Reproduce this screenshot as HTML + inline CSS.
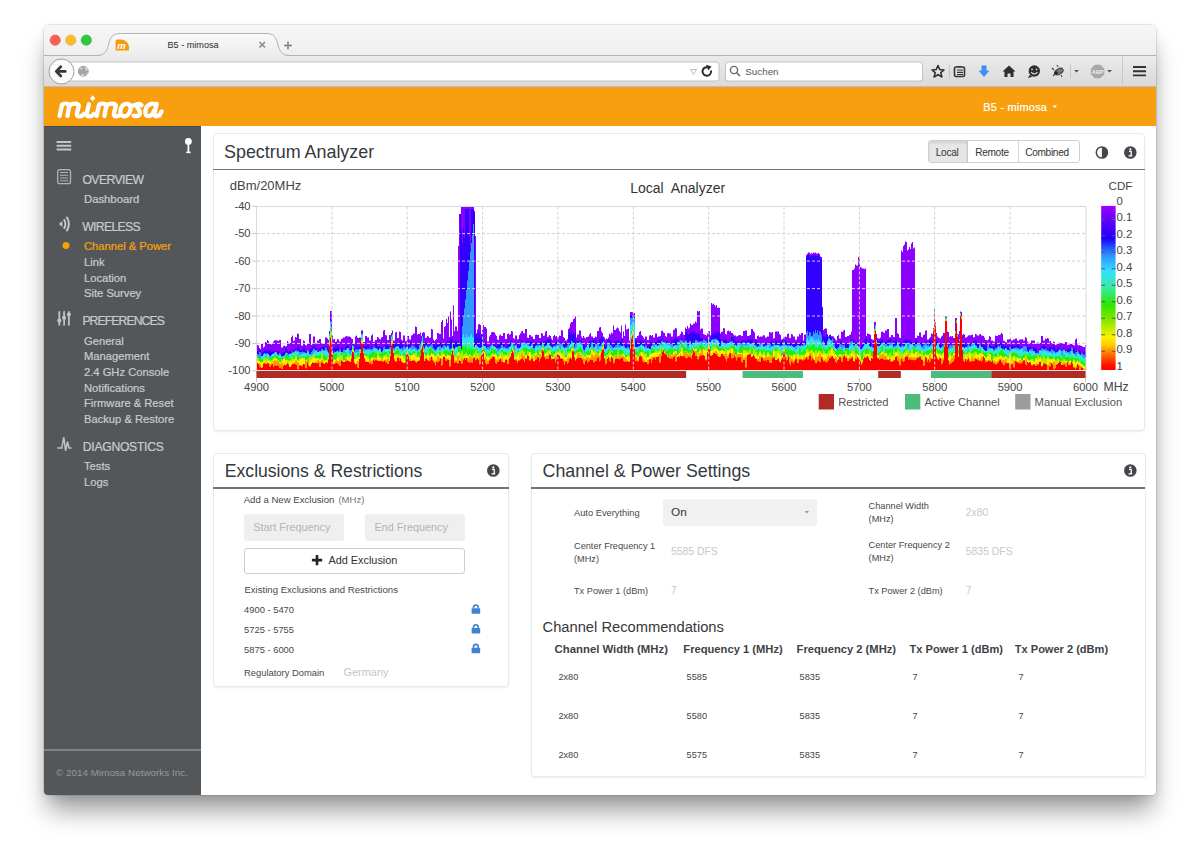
<!DOCTYPE html>
<html><head><meta charset="utf-8"><title>B5 - mimosa</title>
<style>
html,body{margin:0;padding:0;background:#fff;width:1200px;height:858px;overflow:hidden;}
body{position:relative;font-family:"Liberation Sans", sans-serif;}
.t{position:absolute;line-height:1;white-space:pre;}
.sb{-webkit-text-stroke:0.22px currentColor;}
.abs{position:absolute;}
svg{position:absolute;overflow:visible;}
</style></head><body>
<div class="abs" style="left:44px;top:25px;width:1112px;height:770px;border-radius:5px 5px 4px 4px;box-shadow:0 0 0 0.5px rgba(0,0,0,0.17),0 19px 26px -4px rgba(0,0,0,0.40),0 3px 10px rgba(0,0,0,0.08);background:#fff;overflow:hidden;"><div class="abs" style="left:0;top:0;width:1112px;height:30px;background:linear-gradient(#f6f6f6,#efefef);"></div><div class="abs" style="left:0;top:30px;width:1112px;height:1px;background:#bdbdbd;"></div><div class="abs" style="left:0;top:31px;width:1112px;height:31px;background:linear-gradient(#ebebeb,#d9d9d9);"></div><div class="abs" style="left:0;top:61px;width:1112px;height:1px;background:#b4b4b4;"></div></div><svg style="left:0;top:0" width="1200" height="100" viewBox="0 0 1200 100">
<defs><linearGradient id="tabg" x1="0" y1="0" x2="0" y2="1"><stop offset="0" stop-color="#fafafa"/><stop offset="1" stop-color="#ececec"/></linearGradient></defs>
<path d="M96.5 56 C104.5 56 106.5 52 108.5 45 C110.5 37 112.5 33.5 120.5 33.5 L266 33.5 C274 33.5 276 37 278 45 C280 52 282 56 290 56 Z" fill="url(#tabg)"/>
<path d="M44 55.5 L96.5 55.5 C104.5 55.5 106.5 52 108.5 45 C110.5 37 112.5 33.5 120.5 33.5 L266 33.5 C274 33.5 276 37 278 45 C280 52 282 55.5 290 55.5 L1156 55.5" fill="none" stroke="#b3b3b3" stroke-width="1"/>
<circle cx="55.2" cy="40.2" r="5.1" fill="#fc5f57" stroke="#e0443e" stroke-width="0.6"/>
<circle cx="70.7" cy="40.2" r="5.1" fill="#fdbb2e" stroke="#dea236" stroke-width="0.6"/>
<circle cx="86.3" cy="40.2" r="5.1" fill="#2ac940" stroke="#1aab29" stroke-width="0.6"/>
<g transform="translate(115.6,39.4)"><path d="M0 11.2 V1.5 Q0 0 1.5 0 H5.5 C9.8 0 13.4 3.8 13.4 8.2 V11.2 Z" fill="#f49b12"/><text x="1.6" y="9.6" font-family="Liberation Sans" font-style="italic" font-weight="bold" font-size="9.5" fill="#fff">m</text></g>
<path d="M259.5 42 L265 47.5 M265 42 L259.5 47.5" stroke="#8a8a8a" stroke-width="1.6"/>
<path d="M288 41.5 V49.5 M284 45.5 H292" stroke="#7a7a7a" stroke-width="1.4"/>
<rect x="58" y="62" width="661" height="19" rx="3" fill="#fff" stroke="#c2c2c2" stroke-width="1"/>
<rect x="725.5" y="62" width="197" height="19" rx="3" fill="#fff" stroke="#c2c2c2" stroke-width="1"/>
<circle cx="61.5" cy="71.5" r="12.5" fill="#fbfbfb" stroke="#9f9f9f" stroke-width="1"/>
<path d="M56.8 71.4 H65.3 M60.8 66.8 L56.2 71.4 L60.8 76" fill="none" stroke="#383838" stroke-width="2.7" stroke-linecap="round" stroke-linejoin="round"/>
<circle cx="83.3" cy="71.3" r="5.0" fill="#a6a6a6" stroke="#999" stroke-width="0.8"/>
<path d="M79.5 69.5 Q80.5 67.5 82 67 L81.8 69 Z M84.5 67 Q87 67.5 87.8 69.5 L86.5 71 Z M82 74 Q83.5 73.5 84.5 75.5 Q83 76.2 81.5 75.8 Z M86.8 73 L87.8 72.5 Q87.5 74.5 86 75 Z" fill="#e8e8e8"/>
<path d="M690.5 69.5 L696.5 69.5 L693.5 74.5 Z" fill="none" stroke="#b5b5b5" stroke-width="0.9"/>
<path d="M711 70.5 A4.3 4.3 0 1 1 707.5 67.2" fill="none" stroke="#2a2a2a" stroke-width="2"/>
<path d="M706 64.8 L711.5 66.6 L708.3 70.4 Z" fill="#2a2a2a"/>
<circle cx="734" cy="70" r="3.6" fill="none" stroke="#6a6a6a" stroke-width="1.4"/>
<path d="M736.5 72.5 L740 76" stroke="#6a6a6a" stroke-width="1.6"/>
<path d="M938 65.5 L939.8 69.6 L944 69.9 L940.8 72.6 L941.9 77 L938 74.6 L934.1 77 L935.2 72.6 L932 69.9 L936.2 69.6 Z" fill="none" stroke="#2e2e2e" stroke-width="1.5" stroke-linejoin="round"/>
<path d="M949.5 65 V78" stroke="#c4c4c4" stroke-width="1"/>
<rect x="954.5" y="67" width="10" height="9.5" rx="1.5" fill="none" stroke="#333" stroke-width="1.6"/>
<path d="M957.5 66.5 h4 M957 70 h6 M957 72.3 h6 M957 74.5 h6" stroke="#333" stroke-width="1.2"/>
<path d="M981.5 65.5 H986.5 V70.5 H989.5 L984 77 L978.5 70.5 H981.5 Z" fill="#3b8ef5"/>
<path d="M1009 65.5 L1015.5 71.5 H1013.5 V77 H1010.5 V73.5 H1007.5 V77 H1004.5 V71.5 H1002.5 Z" fill="#2e2e2e"/>
<circle cx="1034.3" cy="71" r="5.7" fill="#2e2e2e"/>
<path d="M1029.5 75 L1028 78.2 L1032.5 76.5 Z" fill="#2e2e2e"/>
<path d="M1031.3 72 C1032.5 74.5 1036 74.5 1037.3 72" fill="none" stroke="#ddd" stroke-width="1.2"/>
<circle cx="1032" cy="69.3" r="0.9" fill="#ddd"/><circle cx="1036.5" cy="69.3" r="0.9" fill="#ddd"/>
<g fill="none" stroke="#444" stroke-width="1.1"><ellipse cx="1059" cy="71.5" rx="4.5" ry="2.6" transform="rotate(-30 1059 71.5)" fill="#777"/><path d="M1054 70 l-2 -2 M1055 74 l-2 2 M1061 75 l1 2 M1058 67 l-1 -2"/></g>
<circle cx="1056" cy="73" r="1.8" fill="#222"/>
<path d="M1070.5 65 V78" stroke="#c4c4c4" stroke-width="1"/>
<path d="M1074 70 H1079 L1076.5 72.5 Z" fill="#555"/>
<path d="M1094.8 64.8 H1100.4 L1104.3 68.7 V74.3 L1100.4 78.2 H1094.8 L1090.9 74.3 V68.7 Z" fill="#a8a8a8"/>
<text x="1097.6" y="73.6" font-size="5.6" font-weight="bold" text-anchor="middle" fill="#eee" font-family="Liberation Sans">ABP</text>
<path d="M1107 70 H1112 L1109.5 72.5 Z" fill="#555"/>
<path d="M1122.5 57 V85" stroke="#c8c8c8" stroke-width="1"/>
<path d="M1133 67 H1146 M1133 71.2 H1146 M1133 75.4 H1146" stroke="#333" stroke-width="1.9"/>
</svg>
<div class="t " style="left:167.50px;top:40.60px;font-size:9.1px;color:#2b2b2b;">B5 - mimosa</div>
<div class="t " style="left:745.30px;top:66.90px;font-size:9.8px;color:#555;">Suchen</div>
<div class="abs" style="left:44px;top:87px;width:1112px;height:39px;background:#f89f10;"></div><div class="abs" style="left:44px;top:86px;width:1112px;height:1px;background:#b9bcc0;"></div><svg style="left:0;top:0" width="1200" height="130"><g fill="none" stroke="#fff" stroke-width="4.3" stroke-linecap="round" stroke-linejoin="round">
<path d="M59.6 116 L61.9 105.2 Q62.6 103.6 64.8 103.6 Q69.9 103.4 69.1 106.8 L67.4 116"/>
<path d="M68.9 107.2 Q70.6 103.6 74.2 103.6 Q79.4 103.4 78.6 106.8 L76.9 113.4 Q76.4 116.6 79.6 116.4 Q82.4 116.1 84.2 113.8"/>
<path d="M88.9 104.2 L86.7 113.6 Q86.3 116.6 89.4 116.4 Q92.2 116.1 94 113.8"/>
<path d="M96.6 116 L98.9 105.2 Q99.6 103.6 101.8 103.6 Q106.9 103.4 106.1 106.8 L104.4 116"/>
<path d="M105.9 107.2 Q107.6 103.6 111.2 103.6 Q116.4 103.4 115.6 106.8 L113.9 113.4 Q113.4 116.6 116.6 116.4 Q118.6 116.2 120 114.8"/>
<path d="M127.6 103.9 Q122.4 103.2 120.6 109.5 Q119.5 115.8 123.6 116.3 Q128.6 116.8 130.4 110.3 Q131.6 104.6 127.6 103.9 Z"/>
<path d="M130.2 105.6 Q133 106.2 135.8 104.6"/>
<path d="M141.4 105.2 Q139.2 103.2 137.4 104.9 Q136.3 106.6 138.6 109.3 Q140.6 111.8 139.6 114.3 Q138.2 116.9 133.6 115.6"/>
<path d="M155.6 105.4 Q154 103.3 151.2 103.8 Q146.2 105 145.4 110.8 Q145 116.4 148.6 116.2 Q152.2 115.8 154.2 110.4 M156.6 103.8 L154.5 113.4 Q154.1 116.6 157.2 116.2 Q160.2 115.6 161.6 111.4"/>
</g><path d="M90 98.2 L92.9 95.3 L95.4 98.4 L92.5 101.3 Z" fill="#fff"/><circle cx="161.3" cy="117.3" r="0.7" fill="#fde3b8"/></svg>
<div class="t " style="left:983.30px;top:101.67px;font-size:10.9px;color:#fff;letter-spacing:0.25px;-webkit-text-stroke:0.2px #fff;">B5 - mimosa</div>
<svg style="left:1052px;top:105px" width="6" height="4"><path d="M0.5 0.5 H5 L2.75 3 Z" fill="#fff"/></svg><div class="abs" style="left:44px;top:126px;width:156.5px;height:669px;background:#54575a;border-bottom-left-radius:4px;"></div><div class="abs" style="left:44px;top:126px;width:156.5px;height:1px;background:#3f4a55;"></div><div class="abs" style="left:44px;top:749.3px;width:156.5px;height:2px;background:#7f8285;"></div><svg style="left:0;top:0" width="1200" height="858">
<path d="M56.6 142.1 H71.2 M56.6 145.8 H71.2 M56.6 149.5 H71.2" stroke="#c3c5c7" stroke-width="2.0"/>
<circle cx="188.4" cy="141.5" r="3.4" fill="#fff"/><path d="M188.4 143 V152" stroke="#fff" stroke-width="1.7"/><path d="M186.2 152.4 H190.6" stroke="#fff" stroke-width="1.5"/>
<rect x="57.7" y="169.7" width="12.8" height="14" rx="2" fill="none" stroke="#b0b2b4" stroke-width="1.3"/>
<path d="M60 172.5 H68 M60 175.3 H68 M60 178 H68 M60 180.8 H68" stroke="#b0b2b4" stroke-width="1"/>
<path d="M58.8 224 L62.4 221 V227 Z" fill="#c4c6c8"/>
<path d="M63.9 219.2 Q67 224 63.9 228.8 M66.6 216.8 Q71.2 224 66.6 231.2" fill="none" stroke="#c4c6c8" stroke-width="2"/>
<circle cx="66" cy="245.6" r="3.5" fill="#f7a00d"/>
<path d="M59.3 311.2 V325.5 M64.1 311.2 V325.5 M68.9 311.2 V325.5" stroke="#c0c2c4" stroke-width="1.8"/>
<circle cx="59.3" cy="320.6" r="2.1" fill="#c0c2c4"/><circle cx="64.1" cy="317.8" r="2.1" fill="#c0c2c4"/><circle cx="68.9" cy="314.6" r="2.1" fill="#c0c2c4"/>
<path d="M57.3 448 H61.8 L63.8 437.2 L65.6 450.8 L67.5 441.6 L69 448 H71.5" fill="none" stroke="#c0c2c4" stroke-width="1.5" stroke-linejoin="miter"/>
</svg>
<div class="t sb" style="left:82.40px;top:173.87px;font-size:12.2px;color:#c9cacb;letter-spacing:-0.55px;">OVERVIEW</div>
<div class="t sb" style="left:84.00px;top:194.23px;font-size:11.3px;color:#c9cacb;">Dashboard</div>
<div class="t sb" style="left:82.20px;top:220.97px;font-size:12.2px;color:#c9cacb;letter-spacing:-0.65px;">WIRELESS</div>
<div class="t sb" style="left:84.00px;top:241.42px;font-size:11.2px;color:#f7a00d;">Channel &amp; Power</div>
<div class="t sb" style="left:84.00px;top:257.02px;font-size:11.2px;color:#c9cacb;">Link</div>
<div class="t sb" style="left:84.00px;top:272.72px;font-size:11.2px;color:#c9cacb;">Location</div>
<div class="t sb" style="left:84.00px;top:288.42px;font-size:11.2px;color:#c9cacb;">Site Survey</div>
<div class="t sb" style="left:82.40px;top:315.07px;font-size:12.2px;color:#c9cacb;letter-spacing:-0.9px;">PREFERENCES</div>
<div class="t sb" style="left:84.00px;top:335.52px;font-size:11.2px;color:#c9cacb;">General</div>
<div class="t sb" style="left:84.00px;top:351.22px;font-size:11.2px;color:#c9cacb;">Management</div>
<div class="t sb" style="left:84.00px;top:366.92px;font-size:11.2px;color:#c9cacb;">2.4 GHz Console</div>
<div class="t sb" style="left:84.00px;top:382.62px;font-size:11.2px;color:#c9cacb;">Notifications</div>
<div class="t sb" style="left:84.00px;top:398.32px;font-size:11.2px;color:#c9cacb;">Firmware &amp; Reset</div>
<div class="t sb" style="left:84.00px;top:414.02px;font-size:11.2px;color:#c9cacb;">Backup &amp; Restore</div>
<div class="t sb" style="left:82.80px;top:440.97px;font-size:12.2px;color:#c9cacb;letter-spacing:-0.3px;">DIAGNOSTICS</div>
<div class="t sb" style="left:84.00px;top:461.12px;font-size:11.2px;color:#c9cacb;">Tests</div>
<div class="t sb" style="left:84.00px;top:476.72px;font-size:11.2px;color:#c9cacb;">Logs</div>
<div class="t " style="left:56.00px;top:768.42px;font-size:9.9px;color:#96999c;">© 2014 Mimosa Networks Inc.</div>
<div class="abs" style="left:212.5px;top:133px;width:932.0px;height:297.5px;border:1px solid #e9e9e9;border-radius:4px;box-shadow:0 1px 2px rgba(0,0,0,0.07);box-sizing:border-box;background:#fff;"></div><div class="abs" style="left:212.5px;top:452.5px;width:296.0px;height:234.0px;border:1px solid #e9e9e9;border-radius:4px;box-shadow:0 1px 2px rgba(0,0,0,0.07);box-sizing:border-box;background:#fff;"></div><div class="abs" style="left:531px;top:452.5px;width:614.5px;height:324.0px;border:1px solid #e9e9e9;border-radius:4px;box-shadow:0 1px 2px rgba(0,0,0,0.07);box-sizing:border-box;background:#fff;"></div><div class="abs" style="left:212.5px;top:168.8px;width:932px;height:1.3px;background:#727578;"></div><div class="abs" style="left:212.5px;top:487.4px;width:296px;height:1.3px;background:#727578;"></div><div class="abs" style="left:531px;top:487.4px;width:614px;height:1.3px;background:#727578;"></div><div class="t " style="left:224.00px;top:143.85px;font-size:17.9px;color:#33383d;">Spectrum Analyzer</div>
<div class="t " style="left:224.80px;top:462.80px;font-size:17.6px;color:#33383d;">Exclusions &amp; Restrictions</div>
<div class="t " style="left:542.60px;top:462.63px;font-size:17.8px;color:#33383d;">Channel &amp; Power Settings</div>
<div class="abs" style="left:928px;top:140px;width:151.5px;height:22.8px;border:1px solid #cfcfcf;border-radius:3px;box-sizing:border-box;background:#fff;overflow:hidden;"><div class="abs" style="left:0;top:0;width:38px;height:21px;background:#e6e6e6;box-shadow:inset 0 2px 3px rgba(0,0,0,0.10);border-right:1px solid #c8c8c8;"></div><div class="abs" style="left:88.5px;top:0;width:1px;height:21px;background:#d6d6d6;"></div></div><div class="t " style="left:935.80px;top:147.85px;font-size:10.1px;color:#333;letter-spacing:-0.3px;">Local</div>
<div class="t " style="left:975.20px;top:147.85px;font-size:10.1px;color:#333;letter-spacing:-0.3px;">Remote</div>
<div class="t " style="left:1025.20px;top:147.85px;font-size:10.1px;color:#333;letter-spacing:-0.3px;">Combined</div>
<svg style="left:0;top:0" width="1200" height="858">
<circle cx="1101.9" cy="152.5" r="5.6" fill="none" stroke="#43474b" stroke-width="1.5"/><path d="M1101.9 146.9 A5.6 5.6 0 0 1 1101.9 158.1 Z" fill="#43474b"/>
<circle cx="1130.3" cy="152.5" r="6.3" fill="#43474b"/><circle cx="1130.3" cy="149.3" r="1.1" fill="#fff"/><path d="M1129 151.3 H1131.2 V155.5 H1132 M1128.5 155.8 H1132.2" stroke="#fff" stroke-width="1.3" fill="none"/>
<circle cx="493.3" cy="470.5" r="6.3" fill="#43474b"/><circle cx="493.3" cy="467.3" r="1.1" fill="#fff"/><path d="M1 0" /><path d="M492 469.3 H494.2 V473.5 H495 M491.5 473.8 H495.2" stroke="#fff" stroke-width="1.3" fill="none"/>
<circle cx="1130.3" cy="470.5" r="6.3" fill="#43474b"/><circle cx="1130.3" cy="467.3" r="1.1" fill="#fff"/><path d="M1129 469.3 H1131.2 V473.5 H1132 M1128.5 473.8 H1132.2" stroke="#fff" stroke-width="1.3" fill="none"/>
</svg>
<svg style="left:0;top:0" width="1200" height="858">
<defs><linearGradient id="cbar" x1="0" y1="0" x2="0" y2="1">
<stop offset="0" stop-color="#a000ff"/><stop offset="0.1" stop-color="#5a00ff"/><stop offset="0.2" stop-color="#1e00ff"/><stop offset="0.25" stop-color="#2050ff"/><stop offset="0.3" stop-color="#3090ff"/><stop offset="0.4" stop-color="#33e0ff"/><stop offset="0.5" stop-color="#36eaa0"/><stop offset="0.6" stop-color="#2ee600"/><stop offset="0.7" stop-color="#88e800"/><stop offset="0.8" stop-color="#fff000"/><stop offset="0.85" stop-color="#ffc800"/><stop offset="0.9" stop-color="#ff7800"/><stop offset="0.97" stop-color="#ff1000"/><stop offset="1" stop-color="#ff0000"/>
</linearGradient><filter id="blr" x="-2%" y="-2%" width="104%" height="104%"><feGaussianBlur stdDeviation="0.45"/></filter></defs>
<g filter="url(#blr)"><path fill="#8c00ff" d="M257 370V345H258V345.5H259V348H260V349H261V344H262V343.5H263V347.5H264V346.5H265V342H266V342.5H267V340H268V341H269V343.5H270V344H271V344.5H272V343.5H273V341.5H274V340.5H275V340H276V340.5H278V341H279V340H281V347.5H283V346H284V345.5H285V346.5H286V346H287V341H288V342.5H289V343.5H290V343H291V337H292V335.5H293V341H294V340.5H295V337H296V337.5H297V333.5H298V334H299V339H301V345.5H303V340.5H304V341H305V345H306V345.5H307V343.5H309V334H311V345H312V343.5H313V336.5H315V343.5H317V340.5H319V339H321V343.5H323V344H325V337.5H327V338.5H328V340H329V331H330V311H332V335.5H333V339.5H334V339H335V342H336V341.5H337V339H338V339.5H339V341.5H341V339H342V338.5H343V337.5H345V336.5H346V336H347V336.5H350V337H351V338.5H352V339H353V344H355V336.5H356V335.5H357V337.5H358V338H359V337.5H361V330.5H363V342H365V336H367V337.5H369V340.5H371V335.5H372V334.5H373V342H374V341.5H375V340H377V337H378V337.5H379V339H380V339.5H381V337.5H382V337H383V330.5H384V330H385V335H386V335.5H387V340H389V335H391V333H392V330.5H393V340.5H395V332.5H396V332H397V338H399V331.5H400V332H401V339.5H402V340.5H403V335.5H405V341H407V336H409V339.5H411V335.5H412V335H413V333.5H415V326.5H416V327H417V334.5H418V334H420V332.5H421V336H422V333H423V332H424V332.5H425V338H426V337.5H427V336H428V336.5H429V338H430V337.5H431V329H432V329.5H433V339.5H434V341H435V340H436V339H437V333H439V334H441V322H442V320H443V338.5H444V327H445V326H446V319H447V323H448V316H449V337H450V311.5H451V319.5H452V336H453V305.5H454V331H455V326.5H457V331H458V246H459V214H461V206H474V211H475V236H476V333.5H477V329.5H478V324.5H479V324H480V325H481V334H482V330H483V325H484V327H486V328.5H487V341.5H489V336.5H490V335H491V332.5H492V332H494V332.5H495V334.5H496V336H497V339.5H498V340H499V335.5H500V334.5H501V336H503V333H505V339H507V334H508V333.5H509V335H510V334H511V331H512V331.5H513V338H514V339H515V335.5H517V339.5H518V339H519V335H520V333.5H521V331.5H522V331H523V333H524V333.5H525V329H527V337.5H528V338H529V335H531V336.5H533V339H535V335H536V334.5H537V335H539V338H541V333H542V333.5H543V336H544V335.5H545V331.5H546V331H547V337H548V336.5H549V335H550V336H551V338.5H552V340H553V336H554V335H555V336.5H556V336H557V337.5H558V337H559V335.5H560V336H561V330H562V330.5H563V337H564V338H565V340.5H567V339H568V329H569V327.5H570V323.5H571V322H573V319H574V318.5H575V316.5H576V337.5H577V334.5H579V330.5H581V336.5H582V338H583V336H584V337.5H585V338.5H586V337H588V336.5H589V334.5H590V333H591V336.5H593V338H595V336.5H596V337H597V331H599V327.5H600V327H601V331.5H602V333H603V336.5H604V337.5H605V339.5H606V338.5H607V339H608V337.5H609V333.5H610V334.5H611V332.5H612V333.5H613V325.5H614V330H616V328.5H617V327.5H618V328.5H619V331H620V332.5H621V325.5H622V338H623V331.5H624V336H625V324.5H626V329.5H627V329H628V328.5H629V340.5H630V312H633V313H635V338H637V336H638V335.5H639V332H640V331H641V335H642V336H643V337.5H644V339H645V336.5H647V340H649V335.5H650V335H651V336H652V335H653V337.5H655V333.5H657V337H658V336.5H660V336H661V331H662V330.5H663V332.5H664V333H665V336H666V337H667V333.5H668V333H669V333.5H671V336.5H673V330H674V329.5H675V328H676V328.5H677V336.5H678V336H679V335.5H680V334H681V331.5H682V332H683V334.5H684V335H685V327.5H686V329H687V326H688V328.5H689V327.5H690V323.5H691V325H693V323.5H695V321.5H696V322.5H697V311H698V311.5H699V311H700V329.5H701V328.5H703V334H704V334.5H705V335H706V335.5H707V333.5H708V331H710V335.5H711V303H712V304.5H713V303.5H714V305H715V306.5H716V305H717V308H718V307.5H719V308H720V333.5H721V332H722V331.5H723V328H724V328.5H725V334H726V334.5H727V331H728V330.5H729V331.5H730V331H731V333H733V334.5H734V335.5H736V336.5H737V336H738V335.5H739V335H741V336H743V331H745V330.5H747V336H749V335.5H750V335H751V329H753V331H754V332.5H755V339H756V339.5H757V336H758V335.5H759V337H760V336.5H763V335H764V335.5H765V337.5H767V336.5H769V332H770V332.5H772V332H773V338.5H774V338H775V331.5H779V334H780V335H781V339.5H782V339H783V337.5H784V337H785V336.5H786V337H787V334H788V333.5H789V338H791V334H792V334.5H793V336.5H795V340H796V339.5H797V336.5H799V334H800V335H801V333H803V340.5H804V334.5H806V255H807V253.5H808V252.5H810V254H811V253H812V253.5H813V252.5H814V253H815V252.5H816V253.5H818V253H819V254H820V256.5H821V257H822V307H823V330H824V329H825V328.5H827V334.5H828V336.5H829V335H830V334.5H831V336.5H834V338H835V339.5H836V340.5H837V336H838V335H839V338.5H841V331.5H842V332H843V330.5H844V330H845V337H847V336H849V335H850V334.5H851V331.5H852V270H854V268.5H855V264.5H856V265.5H858V257H859V256.5H860V267H861V267.5H862V268.5H864V269H865V268.5H866V336H867V333.5H868V334H870V335H871V339H872V339.5H873V340H874V322H876V334H877V338H878V338.5H880V337.5H881V332H882V331.5H883V332.5H884V333H885V330.5H887V329H889V337.5H890V337H891V335H893V337H895V318H897V333H898V334H899V337.5H900V338H901V250.5H902V252H903V246H904V244.5H905V241.5H906V242H907V250.5H908V249.5H909V247H910V249H911V243.5H912V242H913V248.5H914V247.5H915V338H917V335.5H918V336H919V332.5H921V337H922V337.5H923V335H924V334.5H925V330.5H927V339.5H929V338H930V337H931V333.5H932V334H933V328H934V309H935V322.5H936V333H937V336.5H938V337.5H939V338H940V338.5H941V336.5H942V335.5H943V333H945V316.5H947V331.5H948V332H949V337H950V336H951V336.5H952V336H953V338H955V318H957V334H958V334.5H959V331H960V311.5H961V312H962V335H963V334H964V334.5H965V337.5H967V336.5H968V335.5H969V335H970V335.5H971V335H972V334.5H973V337.5H974V337H975V334H976V334.5H977V335.5H979V334.5H980V334H981V335.5H983V336H984V337.5H985V340H987V340.5H988V339.5H989V336H990V337H991V340.5H993V341.5H995V335.5H996V336H998V335H1000V334.5H1001V333H1002V334H1003V340.5H1004V341H1005V342H1006V342.5H1007V339.5H1009V339H1010V338.5H1011V340.5H1013V339.5H1015V338.5H1017V340.5H1018V341H1019V339.5H1022V339H1023V340.5H1025V337H1026V338H1027V341.5H1028V342.5H1029V343H1031V340.5H1035V344H1036V343.5H1037V342.5H1039V343H1041V336H1043V340.5H1045V338.5H1046V339H1047V338H1048V338.5H1049V341.5H1050V341H1051V343H1052V343.5H1053V341.5H1054V342H1055V345H1056V344.5H1057V344H1058V343H1059V342.5H1060V343H1063V343.5H1065V342H1067V345H1068V344.5H1070V344H1072V344.5H1073V345H1074V345.5H1075V339.5H1076V338.5H1077V344.5H1078V345.5H1079V345H1080V345.5H1081V346H1082V346.5H1083V347H1085V345H1086V370Z"/>
<path fill="#3300ff" d="M257 370V350.5H258V351.5H259V350H260V351H261V353.5H262V353H263V351.5H264V350H265V350.5H267V350H268V350.5H269V350H270V350.5H271V352H272V351H273V352H274V351H275V351.5H276V352.5H277V350.5H278V351H279V352.5H280V353H281V353.5H283V352.5H284V352H285V348.5H286V348H287V350.5H288V351.5H289V351H291V352.5H292V351H293V350.5H294V350H295V349.5H296V350H297V345.5H298V346H299V350.5H302V350H303V347.5H305V351H307V350H308V350.5H309V350H311V348.5H312V347.5H313V346H315V348H317V352H319V348H321V347.5H323V347H325V346.5H327V347H328V349H329V332.5H330V319H331V327.5H332V349H333V348H334V347.5H335V348H336V347.5H337V345H338V346H339V349.5H341V347.5H343V348.5H345V347.5H346V346.5H347V345H349V348.5H350V349H351V346H352V344H353V345H354V348H355V345.5H356V345H357V347H358V347.5H359V346H361V332H363V346.5H365V345.5H366V346H367V344.5H369V347.5H370V348H372V347.5H373V347H374V346.5H375V343.5H377V346.5H378V347H379V346.5H380V347H383V346H384V345.5H385V345H387V346H388V345.5H389V346.5H391V334.5H392V332H393V342.5H395V344H396V343.5H399V341H400V341.5H401V343.5H402V344.5H403V346.5H405V345H407V345.5H408V345H409V343H411V346H412V345.5H413V346.5H415V344H416V344.5H417V344H418V343.5H419V342H420V341H421V339.5H422V334.5H423V344H424V344.5H425V342.5H426V342H427V345.5H428V346H429V345H430V344H431V343H432V344H433V342H434V343.5H435V345.5H436V344.5H437V345H438V344.5H439V342H441V345H442V344H443V344.5H445V344H446V344.5H447V340.5H448V341.5H449V341H450V338.5H451V339.5H452V338.5H453V341H454V342H455V340.5H457V342H458V340H459V343.5H460V214H461V231H462V244H463V228H464V237.5H465V209H469V237H470V249.5H471V209H474V214H475V334.5H476V333.5H477V338H478V332.5H479V333H480V337H481V334H482V333H483V344H484V344.5H485V341.5H486V343.5H487V346.5H489V347.5H490V346H491V345.5H492V344.5H493V344H494V344.5H495V345H496V346.5H497V343H498V343.5H499V344H500V342.5H501V342H502V342.5H503V343.5H505V347H507V341.5H509V343.5H510V342.5H511V340H512V340.5H513V344.5H514V345.5H517V342.5H518V342H519V345.5H520V344.5H521V340.5H523V342.5H524V343H525V341.5H527V340.5H528V341H529V341.5H533V343.5H535V342.5H536V342H537V345H539V341.5H540V342H541V341.5H542V341H543V341.5H544V341H545V340.5H546V340H547V339H550V340H551V344H552V345H553V343.5H554V343H555V342H556V341H557V341.5H559V342H560V342.5H562V343H564V344H565V343H567V342.5H568V334.5H569V331.5H570V334H571V332.5H572V334.5H573V332.5H574V335H575V332.5H576V341H577V340.5H579V341.5H581V340.5H582V342H583V344H584V345H585V346.5H586V345.5H587V343H588V342.5H589V341H590V340H591V341H593V340H595V339.5H596V340H597V342.5H599V338.5H600V338H601V336.5H602V338H603V340H604V345H605V346.5H606V345.5H607V340H608V339H609V340H610V340.5H611V344H612V345H613V341.5H614V340.5H615V341.5H616V340.5H619V342H621V339H623V343.5H624V344.5H625V344H626V344.5H627V345H630V315.5H631V316H632V315H633V314.5H634V315H635V340.5H636V340H637V342.5H639V340.5H640V339.5H641V340H642V341H643V342H644V343.5H645V345H647V344.5H649V342H651V342.5H652V342H653V343.5H655V342H657V340H658V339.5H659V340H660V339.5H661V338.5H663V340.5H664V341H665V340.5H666V341H667V341.5H668V341H669V343.5H670V344H671V339.5H674V339H675V338.5H677V339H678V338.5H679V341H680V339.5H681V338H682V339H683V342H684V342.5H685V332H687V333.5H688V334.5H689V334H690V331.5H691V333H692V331H693V331.5H695V334H697V333.5H699V334H700V338H703V339.5H704V340H705V339H706V339.5H707V340.5H708V336H709V340H710V341H711V335H712V334H713V332.5H714V334H715V331H716V334.5H717V331.5H718V332H719V333H720V339H721V341.5H723V339.5H724V340H725V339H727V342H728V341.5H729V342.5H730V342H731V337H733V337.5H734V338.5H735V341H736V342H737V340.5H738V340H739V343.5H740V343H741V341H743V340H745V341.5H746V341H747V339.5H748V339H749V339.5H750V339H751V340H752V339.5H753V343.5H754V344.5H755V339H756V339.5H757V343H758V342.5H759V344H760V343.5H761V342.5H762V343H763V344.5H764V345H765V343H767V342H770V342.5H771V341.5H773V344.5H774V344H775V340H777V341.5H779V340.5H780V341.5H781V342H782V341.5H783V338H784V337.5H785V341H786V342H787V342.5H790V343H791V344H792V345H793V344H795V343H796V342.5H797V343.5H801V341.5H802V342H804V341.5H805V342H806V257.5H807V256H808V255H810V256.5H811V255.5H812V256H813V255H814V255.5H815V255H816V256H818V255.5H819V256.5H820V259H821V259.5H822V309H823V336H825V337H826V334.5H828V337H829V335H830V335.5H831V336.5H833V341H834V342H835V343.5H836V344.5H837V343.5H838V342.5H839V342H840V341.5H841V343.5H843V345.5H844V345H845V343.5H846V343H847V342.5H849V342H850V341.5H851V340H852V339.5H853V340.5H854V341H855V343H856V343.5H858V345H859V347.5H860V348H861V346H862V345H863V343H864V341H865V338.5H866V338H867V341.5H868V342H869V338.5H870V339.5H871V345.5H872V346H873V342.5H874V328H875V324H876V339.5H877V340.5H878V341H879V342H880V341H881V339.5H882V339H883V342.5H884V343H885V341.5H886V342H887V340H889V339H891V341.5H893V341H895V339.5H896V339H897V341.5H898V342.5H900V343H902V342.5H903V341.5H904V340.5H905V339.5H907V340H908V341.5H909V340H910V339.5H911V342H913V343H915V339.5H916V339H917V342H918V342.5H919V343.5H921V342.5H922V343H923V345H924V344.5H925V342H927V343H929V340H930V339H931V339.5H932V340.5H933V328.5H934V309.5H935V323H936V340H937V342H938V343H939V344H940V344.5H941V345.5H942V344.5H943V341.5H945V317H947V345H948V345.5H949V344.5H950V343.5H951V345.5H952V345H955V331H956V319H957V334H958V340H959V339.5H960V312H961V315.5H962V343H963V342H964V342.5H965V345H967V344.5H968V343.5H969V343H970V343.5H971V344H972V343.5H973V341H974V340.5H976V341H977V342.5H979V344.5H983V344H984V345.5H987V345H988V344H989V344.5H990V345.5H991V346.5H992V347H993V346.5H995V343H997V346.5H998V345.5H999V343.5H1000V343H1001V342.5H1002V343.5H1003V345H1004V346H1005V345.5H1006V346.5H1007V346H1008V346.5H1009V343.5H1010V343H1011V345.5H1013V346H1015V345.5H1017V343.5H1018V344H1019V347H1022V346.5H1023V345.5H1025V346H1026V346.5H1028V347.5H1029V347H1031V349H1032V348.5H1033V347.5H1035V348.5H1036V348H1037V352H1039V349H1040V348.5H1041V347H1042V346.5H1043V344.5H1044V345H1045V347H1046V347.5H1047V349H1048V349.5H1049V347H1050V346.5H1051V347.5H1052V348H1053V345.5H1054V346H1055V350.5H1056V350H1057V347.5H1058V346.5H1059V348.5H1060V349.5H1061V351H1063V348H1065V350.5H1067V349.5H1068V349H1069V348.5H1071V347.5H1072V348H1073V348.5H1074V349H1075V351.5H1076V351H1077V350H1078V351.5H1079V350H1080V351H1081V353H1082V353.5H1083V352.5H1085V351H1086V370Z"/>
<path fill="#3399ff" d="M257 370V354H258V354.5H259V352H260V352.5H261V356.5H262V356H263V354H264V353H265V353.5H268V354.5H269V355.5H270V356H271V355H272V354H273V353.5H274V352.5H275V352H276V352.5H277V354.5H278V355.5H279V353H280V353.5H281V356H283V356.5H284V355.5H285V353H286V352.5H287V353H288V354H290V353.5H291V353H292V351.5H293V352H294V351.5H295V350.5H298V351H299V352H302V351.5H303V352H305V353H307V350H308V350.5H309V354.5H311V352H312V350.5H313V348.5H314V349H315V350.5H317V352H319V351.5H321V349H323V350.5H325V347.5H327V350.5H328V352.5H329V334H330V321H331V329.5H332V350H333V352.5H334V351.5H335V352H336V351.5H337V351H338V351.5H339V349.5H341V352.5H342V352H343V349.5H345V350H346V349.5H347V348H349V350H350V350.5H351V350H352V345H353V346H354V351H355V349.5H356V348.5H357V349.5H359V349H361V333.5H363V348H365V349H366V349.5H367V348.5H370V349H372V348.5H373V347H374V346.5H375V348H376V348.5H377V349.5H378V350H379V348.5H381V352H382V351.5H383V347H384V346.5H385V349H389V347.5H390V347H391V335.5H392V333.5H393V348H394V348.5H395V347H396V346.5H399V348.5H400V349H401V347.5H402V348.5H403V346.5H405V347.5H406V347H407V346.5H408V349H409V347.5H411V346H412V345.5H413V346.5H415V347.5H416V348H417V350.5H418V349.5H419V345H420V343.5H421V340.5H422V336H423V346.5H424V348H425V346H426V345.5H427V346.5H430V345.5H431V344H432V344.5H433V348H434V349.5H435V350H436V349H437V347.5H438V347H439V346H441V348H442V347.5H443V345.5H444V345H445V346.5H446V347H447V345H448V345.5H449V348.5H452V342.5H453V348.5H454V349H455V347.5H456V347H458V346.5H459V346H460V346.5H461V349H462V326H463V316.5H464V308.5H465V299.5H466V290H467V280.5H468V271H469V262H470V251.5H471V243H472V235H473V224H474V347H475V345H476V344.5H477V346.5H478V347.5H479V348H481V347H482V342H483V345.5H484V346H485V346.5H486V348.5H487V347H489V347.5H490V346H491V345.5H492V344.5H493V346H494V346.5H495V347H496V348.5H497V348H498V348.5H500V347.5H501V345H503V347H504V346.5H505V348H506V348.5H507V347.5H509V347H510V346H511V342H512V342.5H513V344.5H514V345.5H517V348H518V347.5H519V348H520V347H521V342.5H524V343H525V342.5H526V343H528V343.5H529V346H531V344.5H533V348H535V346H536V345.5H537V345H540V345.5H541V345H542V342H543V343.5H544V346.5H545V346H546V345.5H547V344H548V343.5H549V344.5H550V345.5H551V346.5H552V347.5H553V346.5H554V346H555V345.5H556V344.5H557V345H559V343H560V343.5H562V344H563V347H564V347.5H565V347H567V345H568V344H569V345H570V344H571V340.5H572V341.5H573V343H574V346.5H575V344H576V342.5H577V343H579V342H581V343H582V344.5H583V349H584V350H585V347.5H586V346.5H587V344.5H588V344H589V348H590V347H591V342.5H593V346.5H594V347H595V343.5H596V344H597V343.5H598V343H599V346.5H600V346H601V343.5H602V342.5H603V341H604V348.5H605V349.5H606V348.5H607V343.5H608V342.5H609V344H610V345H611V345.5H612V346.5H613V348H614V347H615V345.5H616V345H617V343.5H619V345.5H620V345H621V346H623V344.5H624V346H625V348H626V348.5H627V346.5H628V347H629V348.5H630V318H635V347H638V346.5H639V346H640V345H641V344.5H642V345.5H644V347H645V345.5H647V348H649V349H651V346H652V345H653V344H655V344.5H657V346H658V345.5H659V343.5H660V343H661V341H662V340.5H663V342H664V342.5H665V342H666V343H667V343.5H670V344H671V343.5H673V346H674V345.5H675V345H676V345.5H677V342H678V341.5H680V340H682V340.5H683V342H684V342.5H685V340.5H687V344.5H688V345H689V341H691V344.5H693V342.5H694V343H695V340H697V341H698V341.5H699V342H700V341H702V341.5H703V339.5H704V340H705V340.5H706V341H707V343.5H708V337.5H709V341.5H710V342H711V340.5H712V339.5H714V339H715V338.5H716V339H717V340H718V341H719V346.5H720V346H721V341.5H723V344H724V344.5H725V343H726V343.5H728V343H729V342.5H730V342H731V341H733V344H734V345H735V344.5H736V345.5H737V344.5H738V343.5H740V343H741V343.5H743V342H745V343H747V342.5H749V344H751V343.5H754V344.5H755V345H756V345.5H757V347H758V346.5H759V344H760V343.5H761V343H763V346.5H765V345.5H766V345H767V344.5H769V343.5H770V344H771V346H772V345.5H773V344.5H774V344H775V345H779V345.5H780V346.5H781V345.5H782V345H783V343.5H784V343H785V345H786V345.5H787V345H789V345.5H790V346H791V345H792V346H793V347H795V346H796V345.5H798V345H799V346H801V345H802V345.5H803V344H804V343.5H805V344.5H806V332.5H807V331H808V335.5H809V332H810V332.5H811V336H812V335.5H813V331.5H814V333.5H815V330H816V333H817V330.5H818V335H819V331H820V332H821V334.5H822V342H823V340.5H824V342.5H825V345H827V341H828V338H829V338.5H830V340H832V338.5H833V343H834V344.5H835V348H836V349H837V348H838V347H839V344.5H840V344H841V344.5H842V345H843V345.5H844V345H845V348.5H847V348H849V342H850V341.5H852V341H853V345H855V344H856V344.5H858V346H859V348.5H860V349H862V347.5H863V346.5H864V344.5H865V344H867V342.5H868V343H869V346H870V347H871V346H872V346.5H873V348H874V328.5H875V324.5H876V340H877V345.5H878V346H880V345H881V343.5H882V343H883V342.5H884V343H885V344H887V345.5H889V342.5H893V346.5H894V346H895V345.5H896V345H897V341.5H898V342.5H899V346.5H900V347H901V345.5H902V345H903V346.5H904V346H905V343H907V343.5H908V344.5H910V344H911V344.5H913V345H914V345.5H915V344H917V344.5H919V344H921V346H922V346.5H923V345H924V344.5H925V343H927V345H928V344.5H929V346.5H930V345.5H931V343.5H932V344H933V328.5H934V310H935V323.5H936V345.5H937V344H938V344.5H939V347H940V348H941V347.5H942V346.5H943V344.5H944V344H945V317.5H947V345H948V347.5H949V345.5H950V345H951V345.5H952V345H955V331H956V319.5H957V334.5H958V345.5H959V339.5H960V312.5H961V316H962V347H963V347.5H964V348H965V347H967V345.5H968V344H969V345.5H970V346H971V344H972V343.5H973V344.5H974V343.5H975V345.5H976V346H977V348.5H979V344.5H981V347.5H983V349H984V350.5H985V351H987V345H988V344H989V348H990V348.5H991V348H992V348.5H993V349.5H995V348H997V347.5H998V346.5H999V346H1000V345H1001V348H1002V349H1003V348.5H1004V349.5H1005V348H1006V348.5H1007V350H1009V350.5H1010V349.5H1011V349H1013V348.5H1015V347.5H1017V348H1019V349H1020V348.5H1021V348H1022V347.5H1023V346H1026V347H1027V351H1028V352H1029V349.5H1031V349H1033V351H1035V353H1037V352.5H1039V350H1041V348.5H1042V348H1043V349H1044V349.5H1045V348.5H1046V349H1047V350.5H1049V351.5H1050V351H1051V349H1052V349.5H1053V350.5H1054V351H1055V352.5H1056V352H1057V351.5H1058V350.5H1059V349.5H1060V350H1061V351H1063V349.5H1065V351H1067V352.5H1069V351.5H1070V351H1071V347.5H1072V348H1073V353.5H1074V354H1075V352.5H1076V352H1077V350.5H1078V352H1079V354H1080V355H1081V353H1082V353.5H1083V354.5H1085V357.5H1086V370Z"/>
<path fill="#33ddff" d="M257 370V356.5H258V357H259V358H260V358.5H261V356.5H262V356H263V354.5H264V353.5H265V354.5H267V353.5H268V354.5H269V357.5H271V355H272V354H274V353H275V352H276V352.5H277V354.5H278V355.5H279V354.5H280V355H281V357H283V356.5H284V355.5H285V354H286V353.5H287V356H288V357H289V354H291V354.5H292V353H294V352.5H295V351H296V351.5H297V352H298V352.5H299V355H301V354H303V353.5H305V353H306V353.5H307V351.5H308V352H309V354.5H311V355.5H312V354.5H313V352.5H315V350.5H317V352H319V351.5H321V351H323V350.5H327V352H328V353.5H329V336H330V323.5H331V331.5H332V350.5H333V354H334V353H335V352H336V351.5H337V351H338V352H341V352.5H342V352H343V353H345V350H346V349.5H347V348H349V354.5H351V352H352V346H353V347H354V352H355V352.5H356V352H358V352.5H359V349H361V335H363V350H364V351.5H365V350H366V350.5H367V350H371V351.5H372V351H373V349H374V348.5H375V348H376V348.5H377V349.5H378V350H379V348.5H380V349H381V352H382V351.5H383V350H384V349.5H385V349H389V349.5H391V337H392V335H393V349H394V350H395V347H396V346.5H399V348.5H400V349H401V350.5H402V351.5H403V349.5H405V349H407V347.5H408V349H409V348H411V350H412V349.5H413V349H415V349.5H416V350.5H418V349.5H419V349H420V347.5H421V342H422V337.5H423V347.5H424V349.5H425V346H426V345.5H427V347.5H428V348H429V346.5H430V346H431V348H432V349H433V348.5H434V350H435V351.5H436V350.5H437V347.5H438V347H439V350.5H441V348H442V347.5H443V349H445V346.5H446V347H447V346H448V346.5H449V349.5H450V350H451V348.5H452V344H453V348.5H454V349H455V347.5H456V347H458V346.5H459V346H460V346.5H461V349H462V337H463V334H464V337.5H465V338H466V334H467V337H468V336.5H469V337.5H470V335.5H471V334.5H472V337.5H473V336.5H474V347H475V345H476V345.5H477V346.5H478V347.5H479V348H482V343.5H483V345.5H484V346H485V346.5H486V348.5H487V350H490V348.5H491V345.5H492V344.5H493V346H494V346.5H495V347H496V348.5H497V351.5H499V350H500V349H501V348H502V348.5H505V348H506V348.5H507V349.5H509V347H510V346H511V344.5H512V344H513V347H514V350.5H515V345.5H517V349.5H518V349H519V348H520V347H521V343.5H522V343H523V345H524V345.5H525V344H527V345.5H528V346H531V344.5H533V350H534V350.5H535V346H536V345.5H537V347H539V345.5H540V346H541V347H542V343.5H543V345H544V346.5H545V346H546V345.5H547V344H548V343.5H549V346H550V346.5H551V347H552V348.5H553V346.5H554V346H555V347.5H556V346.5H557V346H558V345.5H559V348.5H560V349H561V345.5H562V346.5H563V347.5H564V348.5H567V348H568V347H569V345.5H570V344H571V343H572V344H574V348.5H576V347.5H577V343H579V344H581V345H582V346.5H583V351H584V352.5H585V348.5H586V347H587V345H588V344.5H589V348H590V347H591V345.5H593V348.5H595V345.5H596V346H597V349.5H598V349H599V346.5H600V346H601V346.5H602V343.5H603V342.5H604V349H605V349.5H606V348.5H607V346H608V345H609V347H610V348H611V348.5H612V350H613V348H614V347H615V348H616V347.5H621V346.5H624V347.5H625V348H626V348.5H629V349.5H630V325H631V324.5H632V323H633V325H634V324H635V347H638V346.5H639V347H640V346.5H641V344.5H642V345.5H643V346H644V347H645V348.5H647V348H649V349H651V346H652V345H653V347H655V345H657V346H658V345.5H660V344.5H661V345.5H663V342H664V342.5H665V344H666V344.5H667V345H668V344.5H669V346H671V347.5H672V348H673V346H674V345.5H675V345H676V345.5H677V346.5H678V345.5H679V345H680V344H681V342.5H682V343H683V343.5H684V344H685V342H686V342.5H687V348H688V348.5H689V342.5H691V344.5H693V343.5H694V344.5H695V342H697V344H698V344.5H699V343.5H700V342.5H701V344.5H704V345H705V342.5H706V343H707V345.5H708V339H709V342.5H710V342H711V340.5H712V339.5H713V343.5H714V343H715V340H718V341H719V346.5H720V346H721V341.5H723V344H724V344.5H725V343.5H726V344H727V343.5H728V343H729V342.5H730V342H731V343.5H733V344H734V345H736V346H737V344.5H738V343.5H739V345H740V344.5H741V347H743V345H744V345.5H745V346H747V345H749V344H751V343.5H753V344H754V345.5H755V347H756V347.5H757V347H758V346.5H759V347H760V346.5H761V344.5H763V346.5H767V344.5H769V348H770V348.5H771V347H772V346.5H774V346H775V345.5H777V345H779V345.5H780V346.5H781V346H782V345.5H783V346H785V345H786V345.5H787V347.5H788V347H789V345.5H790V346H791V345.5H792V346.5H793V347.5H795V349.5H796V348.5H797V345.5H798V345H799V346.5H801V345.5H802V346H803V346.5H804V346H805V345H806V340H807V338H808V340.5H809V340H810V337H811V338H812V337.5H813V339H814V340.5H816V339.5H817V340.5H818V338.5H819V341.5H821V344H822V346.5H823V343.5H824V345H827V343H828V340H829V339H830V340.5H831V343.5H832V342.5H833V346H834V347H835V348H836V349H837V351H838V350H839V347.5H840V347H841V349H842V349.5H843V347.5H844V347H845V348.5H847V348H849V346H850V345.5H851V344.5H853V347H854V347.5H855V344H856V344.5H857V346H858V347.5H859V348.5H860V349.5H862V348.5H863V346.5H864V344.5H865V344H867V342.5H868V343H869V346H870V347H872V347.5H873V348H874V329.5H875V325.5H876V340.5H877V346.5H878V347H879V346H880V345H881V343.5H882V343H883V345H884V346H885V346.5H889V346H890V345.5H891V345H893V348H894V347.5H895V347H896V346.5H897V344H898V344.5H899V346.5H900V347H903V346.5H904V346H905V343H907V348H908V349.5H909V344.5H910V344H911V344.5H913V346.5H914V347H915V347.5H916V347H917V344.5H919V345.5H921V348H922V349H925V346H927V347.5H928V347H929V346.5H930V345.5H932V346.5H933V329H934V310.5H935V324H936V345.5H937V344H938V344.5H939V347H940V348H941V347.5H942V346.5H943V347H944V346H945V318H947V345.5H948V350H949V349.5H950V348.5H952V348H953V346.5H955V331.5H956V320H957V335H958V346.5H959V339.5H960V313H961V316.5H962V347H963V347.5H964V348H965V347H967V348.5H968V347.5H969V346.5H970V347H971V346.5H972V346H973V344.5H974V344H975V345.5H976V346H977V348.5H979V346.5H980V346H981V347.5H983V349H984V350.5H985V351H987V350.5H988V349.5H989V348H990V348.5H993V351.5H995V350H996V350.5H997V347.5H998V346.5H999V348.5H1000V348H1002V349H1003V349.5H1004V350H1005V348H1006V348.5H1007V350H1009V351.5H1010V351H1011V349H1013V348.5H1015V349.5H1017V350H1018V350.5H1019V350H1020V349.5H1021V349H1022V348.5H1023V352H1024V351.5H1026V352H1027V351.5H1028V352.5H1029V350.5H1031V351.5H1032V351H1033V351.5H1035V353H1037V354H1039V351H1040V350.5H1041V351H1042V350.5H1045V351H1046V351.5H1047V351H1048V351.5H1049V352.5H1050V352H1051V353.5H1052V354H1053V352H1054V352.5H1055V353.5H1056V353H1057V352.5H1058V351.5H1059V349.5H1060V350.5H1061V355.5H1063V350.5H1065V352.5H1066V353H1067V352.5H1069V355H1070V354.5H1071V351H1072V351.5H1073V353.5H1074V354H1075V356.5H1076V356H1077V353H1078V354H1079V354.5H1080V355H1081V355.5H1082V356.5H1083V358H1085V357.5H1086V370Z"/>
<path fill="#33eebb" d="M257 370V356.5H258V357H259V358H260V358.5H262V358H263V357.5H264V356.5H265V356H267V355H268V356H269V357.5H270V358H271V356.5H272V356H273V357H274V356H275V354.5H276V355.5H277V355H278V355.5H279V358H280V358.5H281V357H283V356.5H284V355.5H285V354.5H286V353.5H287V356H288V357H289V355H291V354.5H292V353H294V352.5H295V353.5H296V354H297V353H298V353.5H299V358H301V355.5H303V353.5H305V356.5H306V357H307V355H308V355.5H309V357H311V355.5H312V354.5H315V355.5H317V352H319V351.5H323V353.5H325V356.5H327V356H328V357H329V337.5H330V326H331V333.5H332V351.5H333V354H334V353H335V352.5H336V352H337V351.5H338V352.5H343V354H345V352.5H346V352H349V354.5H351V352H352V347H353V348H354V353H355V354.5H356V354H357V352.5H358V353H359V354.5H360V350.5H361V336.5H363V350.5H364V353H365V350H366V350.5H367V351H368V351.5H369V352.5H371V351.5H372V351H373V351.5H374V351H375V349H376V349.5H377V351H378V351.5H379V350.5H380V351H381V352.5H382V352H383V350.5H384V350H385V349.5H386V350H387V350.5H389V351H391V338.5H392V336.5H393V349.5H394V350.5H395V351.5H396V351H397V348.5H399V350H400V351H401V351.5H402V352H403V350H404V350.5H405V353.5H406V351H407V348.5H408V354.5H409V349H411V354H412V353.5H413V349H415V352.5H416V353H417V350.5H418V349.5H419V351.5H420V350.5H421V343H422V339H423V348H424V349.5H425V348.5H426V348H428V348.5H430V347.5H431V349H432V349.5H433V350.5H434V351.5H436V350.5H437V349.5H438V349H439V350.5H441V349.5H442V349H443V351H445V346.5H446V347H447V350H448V350.5H452V345H453V348.5H454V349H455V348.5H456V348H457V349H458V346.5H459V346H460V346.5H461V349H462V342H463V340.5H464V342.5H466V343.5H467V344.5H468V343.5H469V340.5H470V340H471V343H472V339H473V345H474V347H475V345H476V347.5H477V350H478V350.5H479V352.5H481V349.5H482V344.5H483V347H485V351H486V353H487V350H489V350.5H490V349H491V348H492V347H493V346.5H494V347H495V349H496V350.5H497V354H498V354.5H499V350.5H500V349.5H501V350H505V351H507V350.5H508V350H509V347H510V346H511V348H512V345H513V348H514V352H515V349.5H517V351.5H518V350.5H519V348.5H520V347.5H521V350H522V349.5H523V347H524V347.5H525V348H527V347H528V347.5H529V349.5H531V347.5H533V350H534V350.5H535V348.5H536V348H537V347H539V350H540V350.5H541V349.5H542V344.5H543V346H544V348.5H545V349H546V348.5H547V344H548V343.5H549V349H550V349.5H551V347.5H552V348.5H553V350.5H554V350H555V352H556V351.5H557V346H558V345.5H559V348.5H560V349H561V348H562V348.5H564V349.5H565V348.5H567V348H568V347H569V349.5H570V348.5H571V344.5H572V345.5H574V350H575V348.5H576V347.5H577V345.5H579V344.5H580V345H581V347.5H582V348.5H583V352.5H584V353.5H585V351H586V349.5H587V349H588V348.5H589V349H590V347.5H593V348.5H595V348H596V348.5H597V351.5H599V350.5H600V350H601V346.5H602V344.5H603V343.5H604V349H605V354H606V353H607V350H608V349H610V350H612V351H613V350H614V349H615V350H616V349.5H617V350H621V346.5H623V349.5H624V351H625V349.5H626V350H629V352H630V344H631V329.5H632V325H633V334.5H634V346.5H635V349H638V348.5H639V347.5H640V346.5H641V347H642V348H644V349.5H645V351H650V350.5H651V347H652V346H653V347H655V347.5H657V346H658V345.5H659V347H660V346H661V345.5H663V344.5H664V346H665V347H666V347.5H667V346H668V345.5H669V348.5H670V349H672V349.5H673V346H675V347.5H676V348H677V348.5H678V348H679V345H680V344H681V343H682V344H683V346.5H684V347H685V342H686V342.5H687V348H688V348.5H689V347H690V346.5H691V347.5H693V345H694V344.5H695V345H697V348.5H698V349H699V345H700V344.5H704V345H705V344H706V344.5H707V347H708V340.5H709V344H710V345.5H711V345H712V344.5H713V346H714V345.5H715V342.5H716V343H717V344H718V345.5H719V346.5H720V346H721V347.5H723V344H724V344.5H725V345.5H726V346H727V345.5H728V345H729V345.5H730V344.5H731V345.5H732V346H733V344.5H734V346H735V348H736V349H737V348H738V347H739V345H741V347H743V345H744V345.5H745V347H747V346H748V345.5H749V347.5H751V347H753V344.5H754V346H755V347H756V347.5H757V349.5H758V349H759V347H760V346.5H761V348H763V349H764V349.5H765V348H766V347.5H767V351H769V348H770V348.5H771V349.5H772V349H773V347.5H774V347H775V345.5H777V347.5H778V347H780V348H781V350H782V349.5H783V347H784V346.5H786V347.5H789V348H791V350H792V351H793V349.5H795V351.5H796V351H797V350.5H798V350H799V347.5H801V349H803V346.5H804V346H805V347.5H806V343H807V339H808V341H809V342.5H810V340H811V344.5H812V344H813V341.5H814V343H815V344.5H816V344H817V346.5H818V344.5H819V341.5H821V344H822V346.5H823V346H824V347.5H827V344.5H828V342H829V343.5H830V344.5H831V345H832V344H833V347.5H834V348.5H835V349H836V350H837V351H838V350H839V349H840V348.5H841V349H842V349.5H843V350.5H844V349.5H845V348.5H847V348H849V351.5H850V351H851V345.5H852V345H853V347H854V347.5H855V344H856V344.5H857V347H858V348.5H860V349.5H861V351.5H862V350.5H863V348.5H864V346.5H865V349.5H867V345.5H868V346H869V347H870V348H871V350H872V350.5H873V349.5H874V330H875V326.5H876V341H877V346.5H878V347H879V352H880V351H881V346H882V345.5H884V346H885V346.5H887V347H889V346H890V345.5H891V348H894V347.5H895V348H896V347.5H897V345.5H898V346.5H899V349H900V349.5H901V352H902V351.5H903V350H904V349H905V347H906V346.5H907V348H908V349.5H909V350.5H910V350H911V344.5H913V346.5H914V347H915V350H916V349.5H917V347H919V350H921V349H922V349.5H923V352.5H925V351H927V350H929V347H930V346H931V348H932V348.5H933V329.5H934V311H935V324H936V347.5H937V344H938V344.5H939V348.5H940V349H941V349.5H942V348H943V347.5H944V346.5H945V318.5H947V345.5H948V352.5H949V349.5H950V348.5H951V349.5H952V349H953V346.5H955V332H956V320.5H957V335H958V346.5H959V340H960V313.5H961V316.5H962V347.5H964V348.5H965V351H967V350.5H968V349H969V348H970V348.5H971V350H972V349.5H973V347H974V346.5H976V347H977V348.5H979V348H980V347.5H983V349H984V350.5H985V352.5H987V351H988V350H989V351.5H990V352H991V349.5H992V350H993V351.5H995V350H996V350.5H997V354.5H998V353.5H999V350H1000V349.5H1001V348.5H1002V349.5H1003V352.5H1004V353H1005V350.5H1006V351.5H1007V355H1009V351.5H1010V351H1011V350.5H1013V352.5H1015V349.5H1016V350H1017V351.5H1018V352H1019V355.5H1021V352.5H1022V352H1024V351.5H1026V352H1027V353H1028V354H1029V353H1031V354.5H1033V356H1035V354H1037V355H1039V354.5H1040V354H1041V353H1042V352.5H1043V351.5H1044V352H1045V354.5H1046V355H1047V356H1048V356.5H1049V353H1051V353.5H1052V354H1053V355.5H1054V356H1056V355.5H1057V356H1058V355.5H1059V354.5H1060V355H1061V355.5H1063V352H1065V356H1066V356.5H1067V355H1070V354.5H1071V351.5H1072V352H1073V353.5H1074V354H1075V356.5H1076V356H1077V354.5H1078V355.5H1079V354.5H1080V355H1081V356.5H1082V357H1083V358.5H1085V359H1086V370Z"/>
<path fill="#22ee11" d="M257 370V356.5H258V357H259V358H260V358.5H261V359.5H262V359H264V358H265V356H267V359H268V359.5H269V357.5H270V358H271V356.5H272V356H273V357H274V356H275V354.5H276V355.5H277V356.5H278V357H279V358H280V358.5H281V357.5H283V358.5H284V357.5H285V354.5H286V353.5H287V356.5H288V357.5H289V358.5H291V356.5H292V355H293V356.5H294V356H295V355H296V355.5H297V355H298V355.5H299V358H301V356.5H304V357H305V356.5H306V357H307V355H308V355.5H309V357H311V357.5H312V356H313V354.5H315V355.5H317V356.5H318V356H319V355H321V354H323V354.5H324V355H325V356.5H327V356H328V357H329V339H330V328.5H331V335.5H332V352H333V354.5H334V354H336V353H337V356.5H338V357H339V354H341V352.5H343V354.5H345V352.5H346V352H347V357H348V357.5H349V355H351V354H352V348H353V348.5H354V355.5H355V357H356V356.5H357V352.5H358V353H359V354.5H360V351H361V338H363V351H364V355H365V353.5H366V354H367V356H368V356.5H369V353.5H370V354H371V352.5H372V352H374V351.5H375V353.5H377V352H378V352.5H379V354H381V353H382V352.5H383V352H384V351.5H385V352H387V355.5H389V351H391V340H392V338H393V350H394V353H395V351.5H396V351H397V348.5H399V353.5H400V354H401V355H402V355.5H403V353H405V353.5H406V351H407V349.5H408V354.5H409V352.5H411V354H412V353.5H413V351H415V352.5H416V353H417V352H418V351H419V351.5H420V350.5H421V344.5H422V340.5H423V349H424V353.5H425V352H427V354.5H429V348.5H430V347.5H431V349H432V350H433V351H434V352.5H435V355.5H436V354.5H437V353.5H438V353H439V352H441V351.5H442V351H445V350H446V350.5H448V351.5H449V350.5H451V351H452V346H453V353H455V355.5H457V353H458V346.5H459V346H460V347.5H461V349H462V345.5H463V346.5H464V347.5H465V344.5H466V347H467V349.5H469V345.5H470V349H471V348.5H472V349H473V350H474V349.5H475V349H476V348.5H477V350.5H478V351.5H479V354H481V349.5H482V346H483V348H484V348.5H485V351.5H486V353.5H489V353H490V351.5H491V349H492V348.5H493V349.5H494V350H495V349H496V350.5H497V354H498V354.5H500V353H501V350H503V351.5H505V352H506V352.5H507V354H508V353.5H509V352.5H510V351.5H511V348H512V346.5H513V349H514V352H515V354.5H517V351.5H518V350.5H519V351H520V350H522V349.5H523V347.5H524V348H527V348.5H528V349H529V349.5H531V348H532V348.5H533V350H534V350.5H535V352.5H536V352H537V350.5H541V349.5H542V346H543V347H544V348.5H545V350.5H546V350H547V348H548V347.5H549V349H550V349.5H551V352H552V353H553V351.5H554V350.5H555V352H556V351.5H557V347.5H558V347H559V350H560V350.5H561V350H562V351H564V352H565V354.5H567V348.5H568V347H569V349.5H570V348.5H572V346.5H574V352H575V351H576V350H577V349.5H579V347H581V348.5H582V350H583V354.5H584V355.5H585V352.5H586V351.5H587V351H588V350.5H589V352H590V350.5H591V347.5H593V350H594V350.5H595V351.5H596V352H597V351.5H599V350.5H600V350H602V346H603V344.5H604V352H605V354H606V353H607V351H608V349.5H609V349H610V350H611V352H612V353H613V350H614V349.5H615V350H616V349.5H617V351H618V351.5H619V350H623V352H624V353.5H625V354.5H626V355H627V355.5H628V356H629V352.5H630V345H631V331.5H632V327H633V336.5H634V347H635V351.5H637V352.5H639V348.5H640V347.5H641V349.5H642V350H643V351.5H644V353H645V351.5H647V351H649V354H650V353.5H651V348.5H652V347.5H653V349.5H655V351H657V349.5H658V349H659V350.5H660V350H661V349.5H662V349H663V345.5H664V348.5H665V351H666V351.5H667V350H668V349.5H669V348.5H670V349H672V349.5H674V349H676V349.5H677V348.5H678V348H679V351.5H680V350H681V343H682V344H683V346.5H684V347H685V348H687V348.5H688V349H689V350.5H691V348.5H692V349H693V346H694V347.5H695V347H696V346.5H697V348.5H698V349H699V345H700V344.5H701V345H702V345.5H703V348H704V348.5H705V347H706V347.5H707V349H708V342H709V345H710V346H711V347H712V346.5H713V346H714V345.5H715V346H718V347H719V347.5H723V349H724V349.5H725V347.5H726V348H727V349H728V348.5H729V348H730V347.5H731V345.5H732V346H733V345H734V346.5H735V348.5H736V349.5H737V351.5H738V350.5H739V346.5H741V347H745V348H747V346.5H749V347.5H751V348.5H753V346H754V347.5H755V350.5H756V351H757V349.5H758V349H759V349.5H761V350.5H763V349H764V349.5H765V350.5H767V351H769V350.5H771V351.5H772V351H773V350.5H775V347.5H777V349.5H778V349H779V350.5H780V351.5H781V353H782V352.5H783V347H784V346.5H785V348.5H786V349.5H787V348H789V350H790V350.5H791V350H792V351H793V350.5H795V353H796V352.5H797V354.5H799V347.5H801V352H802V352.5H803V349.5H804V349H805V351H806V347.5H807V344.5H808V346H809V347.5H810V345.5H812V345H813V343H814V344.5H815V347.5H816V347H817V348.5H818V347H819V344.5H820V345H821V347.5H822V349.5H823V347.5H824V348.5H825V349.5H828V347H830V347.5H832V347H833V349H834V350H835V351H836V352H837V351H838V350H839V349H842V349.5H843V352H844V351.5H845V348.5H847V349H849V351.5H850V351H851V350.5H852V350H853V351H855V347.5H856V348.5H857V350.5H858V352H859V354H860V355H861V352.5H862V351H864V349H865V349.5H867V348H868V348.5H869V350H870V351H871V351.5H872V352H873V349.5H874V331H875V327.5H876V341.5H877V353H878V353.5H879V352H880V351H881V346.5H882V346H883V352H884V352.5H885V348.5H886V349H887V349.5H889V349H891V348.5H893V350.5H895V348H896V347.5H897V348.5H898V349.5H899V350H900V350.5H901V353.5H902V353H903V351H904V350H905V349H907V349.5H908V351H909V351.5H910V351H911V349H912V349.5H913V346.5H914V347H915V350.5H917V349.5H919V351H921V350.5H922V351H923V352.5H925V351H927V350H929V350.5H930V349.5H931V349H932V349.5H933V329.5H934V312H935V324.5H936V348.5H937V350H938V351H939V350H940V350.5H941V351.5H942V350.5H943V348.5H944V346.5H945V319H947V345.5H948V353H949V352.5H950V351.5H951V352.5H952V351.5H953V352H955V332.5H956V321H957V335.5H958V350.5H959V340H960V314H961V317H962V349.5H963V352H964V352.5H965V353.5H967V350.5H968V349H969V352H970V352.5H971V351H972V350.5H973V349H974V348.5H975V349H977V350H978V350.5H979V349H980V348.5H981V352H983V351.5H984V352.5H987V353.5H988V352.5H989V351.5H990V352.5H991V353H992V353.5H993V354.5H995V353H997V354.5H998V353.5H999V352H1000V351H1001V348.5H1002V349.5H1003V352.5H1004V353H1005V354H1006V354.5H1007V356H1009V351.5H1010V351H1011V353.5H1012V353H1013V352.5H1015V353H1017V354.5H1018V355H1019V357H1020V356.5H1022V356H1023V354.5H1025V354H1026V355H1028V356H1029V353H1031V356.5H1033V356H1035V354.5H1036V354H1037V355.5H1039V354.5H1040V354H1041V357.5H1042V357H1043V356H1045V355.5H1046V356H1047V357H1049V356H1052V356.5H1053V357.5H1054V358.5H1055V356.5H1056V356H1057V357H1058V356H1060V356.5H1061V358.5H1063V354.5H1065V357.5H1067V356.5H1069V358H1070V357.5H1071V356.5H1072V357H1073V358H1074V358.5H1076V358H1077V357.5H1078V359H1079V361.5H1080V362.5H1081V360H1082V361H1083V362.5H1085V359.5H1086V370Z"/>
<path fill="#aaee00" d="M257 370V358H258V358.5H259V361H260V362H261V362.5H262V362H263V359H264V358H266V358.5H267V359H268V359.5H269V360H270V360.5H271V360H272V359H273V358H274V357H275V357.5H276V358.5H277V359.5H278V360H279V361.5H280V362H281V359H282V359.5H283V359H284V358H285V360.5H286V360H287V359.5H288V360.5H291V357.5H292V356H293V359.5H294V359H295V355.5H296V356H297V360H298V360.5H299V359H301V358H302V357.5H303V358H305V360H307V359H309V357H311V357.5H312V356H313V354.5H315V358.5H318V358H319V358.5H321V354H323V360.5H324V361H325V360H327V357H328V358H329V341H330V331H331V337.5H332V353H333V359.5H334V359H335V360H336V359.5H337V356.5H338V357H339V354.5H341V355.5H343V360.5H345V357H346V356.5H347V357H348V357.5H349V355H351V357H352V349H353V349.5H354V359H355V357H356V356.5H360V351.5H361V339.5H363V351.5H364V355H365V355.5H366V356H368V356.5H369V359H370V359.5H371V357.5H372V357H373V358H374V357H375V358H376V358.5H377V352H378V352.5H379V356H380V356.5H381V358.5H383V355.5H384V355H385V354.5H386V355H387V356.5H389V354.5H391V341H392V339.5H393V351H394V354.5H396V354H399V355.5H400V356H401V355H402V356H403V355.5H405V361H406V352.5H407V350.5H408V355.5H409V355H413V353.5H415V352.5H416V353H417V356.5H418V356H419V357H420V355.5H421V345.5H422V342H423V350H424V354H425V355.5H426V355H427V354.5H429V356H430V355H431V353H432V354H433V353.5H434V355H435V356H436V355H437V354H438V353.5H439V355.5H441V351.5H442V351H443V354H445V356H446V356.5H447V354.5H448V355.5H450V356H451V352H452V347.5H453V353.5H454V355.5H457V353H458V352H459V352.5H460V353.5H461V351.5H462V351H463V355H464V354H465V353H466V352.5H467V354.5H468V355.5H469V354.5H470V355H471V356H472V356.5H473V353.5H474V353H475V351H476V350H477V353H478V353.5H479V354H481V353H482V347H483V351H484V352H485V353.5H486V355.5H487V356.5H489V356H490V355H491V354H492V353H493V353.5H494V354H495V353H496V354H497V356H499V354.5H500V353H501V352H502V352.5H503V354.5H505V355H507V354H508V353.5H509V352.5H510V351.5H511V352H512V347.5H513V350H514V353H515V354.5H517V352.5H518V352H519V351.5H520V350.5H521V350H522V349.5H523V351H524V351.5H525V355H527V351H528V351.5H529V352H531V354.5H532V355H533V353.5H535V353H536V352.5H537V355H539V350.5H540V351H541V353H542V347H543V348H544V354H545V353H546V352.5H547V350.5H548V350H550V350.5H551V356.5H552V357.5H553V354.5H554V353.5H555V352.5H556V352H557V351.5H558V352H559V350H560V350.5H561V352.5H562V353H563V351H564V352H565V357H567V352.5H568V351H569V352.5H570V351.5H571V349H572V348H574V354.5H576V353H577V352H581V352.5H582V353.5H583V355H584V356.5H585V355H586V353.5H587V355.5H588V355H590V354H591V349H592V349.5H593V351H595V351.5H596V352H597V354H598V353.5H599V350.5H600V350H601V352H602V347H603V346H604V355.5H605V356H606V355H608V353.5H609V351H610V351.5H611V354.5H612V356H614V355H615V355.5H616V355H617V351.5H619V355.5H621V354H623V353.5H624V354.5H625V357H626V357.5H627V355.5H628V356H630V346H631V333.5H632V329.5H633V338H634V347.5H635V355H637V356H638V355.5H639V353H640V352H642V352.5H644V353.5H647V357H649V354H650V353.5H651V354H652V353H654V352.5H655V351H658V350.5H660V350H661V354H662V349.5H663V347H664V351.5H665V353.5H666V354H667V355.5H668V355H669V353H670V353.5H671V354.5H672V355H673V351.5H674V351H675V350.5H676V351H677V355H678V354H679V353H680V351.5H681V347H682V347.5H683V352.5H684V353H685V351H687V352.5H688V353H690V352.5H691V354.5H692V352.5H693V347.5H694V349H695V348.5H697V352H698V352.5H699V349.5H700V348.5H701V350H703V349H704V350H705V347.5H706V348H707V350H708V343.5H709V346H710V351.5H711V348H712V347.5H713V346H715V347H717V349H718V350.5H719V351.5H720V351H721V350H723V351H724V351.5H725V348.5H726V349H727V350H729V349H730V348H731V348.5H733V350.5H734V351.5H735V354H736V355H737V352H738V351.5H739V353H742V353.5H743V349.5H745V350.5H746V350H747V351.5H749V349H750V348.5H751V354H753V348H754V349H755V351.5H756V352H757V355H758V354.5H759V351.5H761V354H763V351.5H765V355.5H766V355H767V352H769V354.5H770V355H771V355.5H772V355H773V350.5H775V351H777V349.5H779V350.5H780V351.5H781V356H782V355H783V349H785V354H786V355H787V356H788V355.5H789V355H790V355.5H791V355H792V356H793V354.5H795V354H796V353.5H797V354.5H799V355H801V354.5H802V355H803V354.5H805V353H806V350H807V348.5H808V349.5H809V352.5H810V351H811V350H813V352H814V353.5H815V350.5H817V353H818V351.5H819V350.5H820V351H821V353H822V354H823V350H824V351H825V353.5H827V353H828V351H829V349.5H830V350H831V348H833V350.5H834V351.5H835V354H836V355H837V356.5H838V355.5H839V354H841V354.5H842V355H843V354.5H844V354H845V351H847V355H849V353.5H850V353H851V350.5H853V351H854V351.5H855V353.5H856V354.5H857V353.5H858V355H859V354H860V355H861V360H862V359H863V352H864V350H865V354.5H867V353.5H868V354H869V350.5H870V351.5H871V356.5H872V357H873V350H874V332H875V328.5H876V342H877V354.5H878V355H879V354.5H880V353.5H881V352H882V351.5H883V352H884V352.5H885V353H887V355H889V353H890V352.5H891V356H893V350.5H895V352.5H896V352H897V349.5H898V350H899V351H900V351.5H901V354H902V353.5H903V353H904V352H905V350.5H907V350H908V351H909V353H910V352.5H911V349.5H913V353H914V353.5H915V352H917V351H919V353.5H921V350.5H922V351H923V355H924V354.5H925V353.5H926V354H927V355H929V353.5H930V352.5H931V353.5H932V354H933V330H934V312.5H935V325H936V350.5H937V353H938V354H939V353H940V353.5H941V354.5H942V353H943V352.5H944V346.5H945V319.5H947V346H948V357.5H949V353H950V352H951V356H952V355.5H953V353H955V332.5H956V321.5H957V335.5H958V354.5H959V340.5H960V314.5H961V317.5H962V349.5H963V354H964V354.5H965V353.5H968V352.5H969V352H970V352.5H971V353.5H972V353H974V352.5H975V351.5H976V352H977V354H979V353.5H980V353H981V352.5H983V354.5H984V356H985V357H987V353.5H988V352.5H989V354H990V354.5H991V360.5H992V361H993V356H995V357H997V355H998V354H999V356H1000V355H1001V356.5H1002V357.5H1003V356.5H1004V357H1005V356H1006V357H1007V357.5H1009V354H1010V353.5H1011V357.5H1012V357H1013V356H1015V357H1016V357.5H1018V358H1021V360.5H1022V360H1023V358H1024V357.5H1025V355H1026V356H1027V359H1028V360H1029V360.5H1031V359H1033V361.5H1035V358.5H1036V358H1037V355.5H1039V357H1040V356.5H1041V358.5H1042V358H1043V356.5H1045V358.5H1047V357H1049V359.5H1050V359H1051V358.5H1052V359H1053V358H1054V359H1055V360H1056V359.5H1057V359H1058V358H1059V360H1060V361H1061V360.5H1063V359H1065V360.5H1067V361.5H1069V361H1070V360.5H1071V362H1072V362.5H1073V359.5H1074V360H1075V362H1076V361.5H1077V360H1078V361.5H1080V362.5H1081V364H1082V364.5H1083V366H1086V370Z"/>
<path fill="#ffee00" d="M257 370V360.5H258V361H260V362H261V362.5H262V362H263V361.5H264V360.5H265V362.5H267V360.5H268V361H269V361.5H270V362H271V364.5H272V364H273V360H274V359H275V358H276V359H277V361H278V361.5H279V362.5H281V362H283V359H284V358H285V360.5H286V360H287V361.5H288V362.5H289V361H290V360.5H291V362.5H292V361H293V359.5H294V359H295V357H296V357.5H297V360.5H298V361.5H299V359H301V358H302V357.5H303V358H305V360.5H306V361H307V359.5H308V360H309V361.5H311V360H312V358.5H313V358H315V358.5H318V358H319V360H321V359H323V360.5H324V361H325V360H327V362H328V358.5H329V342.5H330V333H331V339H332V353.5H333V360.5H334V360H336V359.5H337V357H338V358H339V360.5H345V358.5H346V358H347V357H348V357.5H349V358H352V350H353V350.5H354V359H356V358.5H359V358H360V352H361V341H363V352.5H364V358.5H365V356H366V356.5H367V359H370V359.5H371V358.5H372V358H374V357H375V358H376V358.5H377V355.5H378V356H379V358H381V358.5H383V358H384V357H385V356.5H386V357H387V359H388V358.5H389V357.5H390V355H391V342.5H392V341H393V351.5H394V356H396V355.5H397V356.5H399V355.5H400V356H401V355H402V356H403V358.5H405V361H406V353.5H407V351.5H408V355.5H409V357.5H411V355H413V354.5H415V356.5H416V357H417V357.5H418V357H420V355.5H421V347H422V343.5H423V350.5H424V354H425V358.5H426V358H427V354.5H429V356H430V355H431V353H432V354H433V354.5H434V356H435V357.5H436V356.5H437V354H438V353.5H439V356H441V356.5H442V355.5H443V354.5H445V356H446V356.5H447V354.5H448V355.5H450V356H451V353H452V348.5H453V354.5H454V358.5H455V357.5H457V353H458V352.5H459V359H460V360H461V358.5H462V358H464V357H465V356H466V355.5H467V356.5H468V357.5H469V354.5H470V355H471V356.5H472V357H473V356H474V355.5H475V359H476V358.5H477V356.5H478V357H479V356.5H480V356H481V354H482V348H483V351H484V352H485V355.5H486V357.5H487V356.5H489V360H490V358.5H491V356.5H492V356H493V354.5H494V355H495V354.5H496V356H497V359.5H499V356H500V355H501V357.5H502V358H503V357H505V355H506V355.5H507V357H509V358.5H510V357H511V352H512V349H513V351H514V357.5H517V355.5H518V355H519V358H520V356.5H521V354.5H522V354H524V354.5H525V355H528V355.5H529V352.5H531V355.5H533V358.5H534V359H535V353H536V352.5H537V357H539V352.5H541V355H542V348H543V349H544V356H545V353H546V352.5H547V354.5H548V354H549V351.5H550V352.5H551V356.5H552V357.5H554V357H555V354.5H556V354H557V352.5H558V353H560V353.5H561V354.5H562V355.5H563V357.5H564V358.5H565V357H567V355H568V354H570V353H571V353.5H572V349H574V356.5H575V354.5H576V353H579V355H581V358H582V359.5H583V356H584V357.5H585V357H586V355.5H588V355H590V354H591V350H593V352.5H594V353H595V353.5H596V354H598V353.5H599V353H600V352.5H601V352H602V348H603V347H604V357.5H605V360H606V359H608V357.5H609V354H610V355H611V357H612V358H613V361H614V360H615V355.5H616V355H617V357.5H618V358H619V355.5H621V356.5H623V353.5H624V354.5H625V357H626V357.5H627V356.5H628V357H629V357.5H630V347H631V335H632V331.5H633V339.5H634V348.5H635V355H637V357.5H639V355.5H640V354.5H641V352H642V352.5H643V355H644V356.5H645V358.5H647V357H649V355H650V354.5H651V354H652V353H655V352.5H657V353.5H658V352.5H659V352H660V351.5H661V354H662V350.5H663V348H664V351.5H665V353.5H666V354H667V355.5H668V355H669V353.5H670V354H671V356H673V352.5H674V352H675V351H676V351.5H677V355H678V354H679V353H680V351.5H681V349H682V350H683V353H684V353.5H685V352H687V354H688V354.5H689V353H690V352.5H691V354.5H692V353H693V348.5H694V351H695V348.5H697V355H698V355.5H699V351.5H700V351H701V350H703V349H704V350H705V350.5H706V351H708V345H709V347.5H710V351.5H711V351H712V350.5H713V350H714V349.5H715V348.5H716V349H718V350.5H719V351.5H720V351H721V350H723V351H724V351.5H725V353.5H726V354H727V350H729V353.5H730V353H731V348.5H733V350.5H734V352H735V354H736V355H737V352H738V351.5H739V353H741V354.5H743V351H745V353H749V354H750V353.5H751V354H753V355H754V356H755V354.5H756V355.5H757V357H758V356.5H759V352H760V351.5H761V356H763V354.5H765V356.5H766V356H767V353.5H769V356.5H770V357H771V355.5H772V355H773V351.5H774V351H775V358.5H777V353H779V355H780V355.5H781V356H782V355H783V350H785V354H786V355H787V356.5H790V357H792V358H793V354.5H795V357.5H796V357H797V354.5H799V359.5H801V355.5H802V356H803V358H804V357.5H805V355H806V353H807V352H808V352.5H810V351H811V356H812V355.5H813V352H814V353.5H815V356H816V356.5H817V353H818V351.5H819V353H821V353.5H822V354.5H823V353.5H824V354H826V354.5H827V356.5H828V355H829V354H830V353.5H831V349.5H833V353.5H834V354.5H835V354H836V355H837V359H838V358H839V354H841V356.5H842V357H843V356H844V355H845V354.5H847V355H849V358H850V357H851V353H853V354.5H854V355H855V355.5H856V356H857V353.5H858V355H860V356H861V361.5H862V360H863V359H864V357.5H865V354.5H867V353.5H868V354H869V355.5H870V356.5H872V357H873V350H874V332.5H875V329H876V342.5H877V355H878V355.5H879V356.5H880V355.5H881V352.5H882V352H883V355.5H884V356H885V353H887V356.5H889V359H891V356H893V357.5H894V357H895V352.5H896V352H897V353H898V354H899V358.5H900V359H901V357H902V356.5H903V356H904V355H905V354H906V353.5H907V354H908V355H909V356H910V355.5H911V353H912V353.5H913V354H914V354.5H915V352.5H916V352H917V357.5H918V358H919V354.5H921V358H922V358.5H923V357H925V355.5H927V355H929V354H930V353H931V353.5H932V354.5H933V330.5H934V313H935V325.5H936V353H938V354H939V355H940V355.5H941V356H942V355H943V353H944V347H945V320H947V346H948V357.5H949V355.5H950V354.5H951V358H952V357.5H953V353H955V333H956V322H957V336H958V354.5H959V340.5H960V315H961V318H962V349.5H963V359H964V359.5H965V354.5H967V358.5H968V357.5H969V353.5H970V354H971V357H972V356.5H973V359H974V358.5H975V354.5H976V355H979V353.5H980V353H981V354H983V355H984V356H985V358H987V357H988V356H989V354H990V354.5H991V360.5H992V361H993V359H995V357H996V357.5H997V358H998V357H1000V356H1001V356.5H1002V357.5H1004V358H1005V356H1006V357H1007V359H1009V355.5H1010V355H1011V361H1013V356.5H1015V361H1017V357.5H1018V358H1019V359H1020V358.5H1021V361H1022V360.5H1023V358H1026V359H1028V360H1029V360.5H1031V359.5H1032V359H1033V361.5H1035V358.5H1036V358H1037V360H1039V359H1040V358.5H1041V362H1042V361.5H1043V363.5H1045V363H1046V363.5H1047V358.5H1049V359.5H1051V360H1052V360.5H1053V358.5H1054V359H1055V365H1056V364.5H1057V362.5H1058V361.5H1059V360.5H1060V361.5H1061V365H1063V362H1064V361.5H1065V361H1066V361.5H1067V362H1069V361H1070V360.5H1071V362H1072V362.5H1073V359.5H1074V360.5H1075V363H1076V362.5H1077V361H1078V362H1079V363.5H1080V364H1082V364.5H1083V366H1086V370Z"/>
<path fill="#ff9900" d="M257 370V363H258V364H259V363H260V364H261V368H262V367.5H263V363.5H264V362.5H265V363.5H266V364H267V362.5H268V363.5H270V364H271V364.5H272V364H273V361.5H274V360.5H275V360H276V361H278V361.5H279V363H280V363.5H281V363H283V365H284V364H285V365H286V364.5H287V361.5H288V363H289V367H291V365.5H292V364H293V363H294V362.5H295V360.5H297V362H298V362.5H299V365.5H301V365H302V364.5H303V364H304V364.5H305V360.5H306V361H307V359.5H308V360H309V366.5H311V364H312V362.5H313V363H315V362.5H317V360H318V359.5H319V361.5H321V360H323V363.5H324V364H325V362.5H327V362H328V359H329V344.5H330V335.5H331V341H332V354H333V363.5H334V363H335V361H336V360H337V361H338V361.5H339V360.5H343V362H345V358.5H346V358H347V360.5H348V361H349V361.5H350V362H351V358H352V351H353V351.5H354V362.5H355V364.5H356V364H357V361H358V361.5H359V359H360V352.5H361V342.5H363V353H364V358.5H365V361H367V362H369V359H370V359.5H371V361H372V360.5H373V359H374V358H375V358.5H376V359H377V360.5H378V361H379V360.5H381V359H382V358.5H383V361.5H384V360.5H385V359.5H386V360H387V359H388V358.5H389V361H390V355.5H391V344H392V342.5H393V352.5H394V358H395V361.5H396V361H397V356.5H399V357.5H400V358.5H401V361.5H402V362.5H403V363H405V361H406V354.5H407V352.5H408V356H409V359H410V358.5H411V361H412V360.5H415V361H416V361.5H417V361H418V360.5H420V356H421V348H422V345H423V351.5H424V361H425V358.5H426V358H427V360H428V360.5H429V357.5H430V356.5H432V357.5H433V360H434V361H436V360H437V356.5H438V356H439V358H441V359H442V358.5H443V357H444V356.5H445V358H446V358.5H447V359H448V359.5H449V360H451V353.5H452V350H453V355H454V359.5H455V360.5H457V356H458V355.5H459V360.5H460V361H461V358.5H462V358H463V359.5H464V358H466V357.5H467V358H468V359H469V356H470V356.5H471V357H472V357.5H474V357H475V359H476V358.5H477V358H478V359H479V356.5H480V356H481V354.5H482V349.5H483V352.5H484V359H485V357H486V359H487V360.5H490V359H491V356.5H492V356H493V356.5H494V357H495V359H496V360H497V359.5H500V358.5H503V362.5H505V358.5H506V359H507V360H508V359.5H509V358.5H510V357H511V353H512V350H513V352H514V358.5H515V359H517V361H518V360.5H520V359.5H521V354.5H522V354H523V355H524V355.5H525V358.5H526V359H527V355.5H528V356H529V360.5H531V356.5H533V361H534V361.5H535V355.5H536V355H537V357H539V354H540V354.5H541V356.5H542V349.5H543V350H544V356H546V355.5H548V355H549V354H550V355H551V358H552V359H554V358.5H555V356H556V355.5H557V353.5H558V354H559V355.5H560V358.5H562V359H564V360H565V361.5H567V358H568V356.5H569V358H570V357H571V358H572V350.5H573V350H574V357H575V360.5H576V359H577V353H579V355H581V358H582V359.5H583V357.5H584V359H585V358H586V357H587V357.5H588V357H589V359H590V358H591V354H592V354.5H593V356H595V354H597V354.5H599V356H600V355H601V352.5H602V349H603V348.5H604V358H605V360H606V359H608V357.5H610V358.5H611V357H612V358H613V361H614V360H615V355.5H616V355H617V357.5H618V358H619V356H621V356.5H623V356H624V357H625V358.5H626V359H627V361H629V361.5H630V348H631V337H632V334H633V341H634V349H635V356.5H637V360H638V359.5H639V355.5H640V354.5H641V355.5H642V356H643V359H644V360H645V362H647V360H648V359.5H650V359H651V357.5H652V356.5H653V357.5H655V356.5H656V357H658V356.5H659V354H660V353.5H661V354H662V351H663V349H664V353H665V353.5H666V354H667V355.5H668V355H669V353.5H670V354H671V356H673V355H674V354.5H675V353H676V353.5H677V357H678V356.5H679V355.5H680V354H681V356H682V356.5H683V353H684V353.5H685V352H687V354H688V354.5H689V353.5H691V355.5H692V353.5H693V349.5H694V351.5H695V351H697V355.5H698V356H699V353.5H700V353H701V350H703V355H704V356H705V359H706V359.5H707V352H708V346.5H709V348.5H710V354H711V355.5H712V355H713V352.5H715V351H717V353.5H718V354.5H719V357H720V356.5H721V354H723V353.5H724V354H725V353.5H726V354H727V355.5H728V355H729V353.5H730V353H732V353.5H733V351H734V352H735V354H736V355H737V354.5H738V354H741V354.5H743V358H745V357H747V355H748V354.5H749V354H750V353.5H751V357H752V356.5H753V355H754V356H755V358.5H756V359H757V359.5H758V359H759V356H761V357.5H763V358H765V356.5H770V357H771V355.5H772V355H773V356.5H774V356H775V360H777V358.5H779V361.5H780V362.5H781V358.5H782V357.5H783V351H785V355.5H786V356.5H790V357H791V359H792V359.5H793V360.5H795V357.5H796V357H797V359.5H798V359H799V359.5H801V359H802V359.5H803V358H804V357.5H805V358.5H806V357H807V356.5H809V353H810V352.5H811V356H812V355.5H813V359.5H814V360.5H815V356.5H816V357H818V356H819V353H820V353.5H821V357H823V360H825V359H826V359.5H827V357H828V355.5H829V356.5H830V355.5H831V356H833V358H834V359H835V356.5H836V357.5H837V360.5H838V359.5H839V356H841V357.5H843V356.5H844V355.5H845V356H846V355.5H847V358H850V357H851V356.5H852V356H853V361H854V361.5H855V355.5H856V356H857V357H858V358.5H859V359.5H860V360.5H861V363.5H862V362.5H863V359H864V357.5H865V356.5H867V356H868V356.5H869V360H870V361H871V358H872V358.5H873V350.5H874V333.5H875V330H876V343H877V358H878V358.5H879V356.5H880V355.5H881V354.5H882V354H883V355.5H884V356H885V355.5H886V356H887V359.5H888V360H889V359H891V361.5H893V360H895V357H896V356.5H897V355.5H898V356.5H899V358.5H900V359H901V357H902V356.5H903V358.5H904V357.5H905V355.5H907V354H908V355H909V357.5H910V357H912V357.5H918V358H919V356H921V359H922V359.5H923V361H924V360.5H925V356.5H926V357H927V360H928V359.5H929V355H930V354H931V358.5H932V359H933V330.5H934V313.5H935V326H936V356.5H937V358.5H938V359.5H939V357H940V358H941V359H942V358H943V358.5H944V347H945V320.5H947V346H948V360.5H949V361.5H950V360.5H951V358.5H952V358H953V355.5H955V333.5H956V322.5H957V336.5H958V356.5H959V340.5H960V315.5H961V318.5H962V349.5H963V359H964V359.5H965V359H968V357.5H969V359.5H970V360.5H971V357H972V356.5H973V359H974V358.5H976V359H977V357.5H979V360H980V359.5H981V357H983V356.5H984V358H985V360H987V361.5H988V360.5H989V359.5H990V360.5H992V361H993V360.5H995V362H996V362.5H997V361.5H998V360.5H999V358.5H1000V358H1001V359.5H1002V360.5H1003V359.5H1004V360.5H1005V358.5H1006V359H1007V363H1009V363.5H1010V363H1013V360.5H1015V361H1017V361.5H1018V362H1019V360.5H1021V361H1022V360.5H1025V358.5H1026V359.5H1027V362H1028V363H1029V362H1030V362.5H1031V364.5H1035V364H1036V363.5H1037V364.5H1039V362H1040V361.5H1041V366.5H1042V366H1043V363.5H1046V364H1047V365H1049V362H1051V363H1052V363.5H1053V361.5H1054V362H1055V365H1056V364.5H1057V364H1058V363H1059V360.5H1060V361.5H1061V365H1063V362.5H1066V363H1067V362H1069V363.5H1071V362H1072V362.5H1073V366.5H1074V367H1076V366H1077V364H1078V365H1079V365.5H1080V366H1081V366.5H1082V367.5H1083V368.5H1085V366.5H1086V370Z"/>
<path fill="#ff0000" d="M257 370V363H258V364H259V366.5H260V367.5H261V368H262V367.5H263V363.5H266V364H267V363H268V363.5H269V366.5H270V367H271V364.5H272V364H273V367H274V366H275V365.5H276V366H277V365.5H278V366H279V368H281V369H283V366H284V365H285V365.5H286V364.5H287V363.5H288V364.5H289V367H291V365.5H292V364H295V364.5H296V365H297V369H298V369.5H299V365.5H301V366.5H302V366H303V364H304V364.5H305V368H306V368.5H307V362.5H308V365.5H309V366.5H311V364H312V362.5H313V363H315V362.5H316V363H317V363.5H318V363H319V367H321V362.5H323V363.5H324V364H325V362.5H327V363.5H328V359.5H329V346H330V338H331V343H332V355H333V364.5H334V364H335V363.5H336V363H337V363.5H338V364.5H339V366H341V360.5H342V361.5H343V362H345V361.5H346V361H347V360.5H348V361H349V361.5H350V362H351V358.5H352V352H353V352.5H354V363H355V364.5H356V364H357V367.5H358V368H359V359H360V353H361V344H363V353.5H364V358.5H365V362H369V363.5H371V364.5H372V364H373V360H374V361H375V360H376V360.5H378V361H381V361.5H384V360.5H385V362H386V362.5H387V364H389V361H390V356H391V345.5H392V344H393V353H394V360.5H395V361.5H396V362H397V358H399V361H400V358.5H401V361.5H402V362.5H403V363H405V362.5H406V355H407V353.5H408V356.5H409V361H412V360.5H415V362H416V363H417V361.5H418V361H419V360.5H420V356H421V349.5H422V346.5H423V352.5H424V361H425V359H426V358.5H427V360.5H429V361.5H430V360.5H431V357H432V360.5H433V361.5H434V363H435V365.5H436V362H437V362.5H438V362H439V361H440V358.5H441V366H442V365H443V357H444V356.5H445V360.5H446V361H447V359.5H448V360H449V366.5H451V354.5H452V351H453V355.5H454V363H455V362.5H457V363.5H459V360.5H460V361H461V364H462V363.5H463V359.5H464V358H465V360H466V358H467V361.5H468V362.5H470V363H471V362.5H472V363H473V358.5H474V357.5H475V360.5H476V360H477V358H478V360H479V364.5H480V364H481V355.5H482V350.5H483V353.5H484V360H485V363H486V365H487V364H489V360.5H490V359H491V358.5H492V357.5H493V356.5H494V357H495V363H496V364H497V362H499V359.5H500V358.5H501V361.5H502V362H503V362.5H505V360H507V364H509V358.5H510V357H511V353.5H512V351H513V353H514V360H515V360.5H517V363H518V360.5H520V359.5H521V359H522V358.5H523V360H524V362H525V358.5H526V359H527V355.5H528V356H529V360.5H531V359H533V361H534V361.5H535V360H536V359.5H537V357.5H539V361.5H540V359H541V357H542V350.5H543V351.5H544V357H545V359.5H546V359H549V354.5H550V355H551V359.5H552V359H554V358.5H555V362.5H556V359.5H557V354.5H558V355H559V356H560V358.5H562V359H563V361.5H564V365H565V361.5H567V364H568V362.5H569V359H570V358H571V359.5H572V351.5H574V357.5H575V360.5H576V359H577V358H582V359.5H583V363.5H584V364.5H585V361H586V360H587V362.5H588V362H589V361H590V360H593V362H594V362.5H595V361H597V358H598V357.5H599V361.5H600V360.5H601V352.5H602V350H603V349.5H604V358.5H605V364.5H606V363.5H607V359H608V357.5H609V361H610V362H611V357H612V358H613V363.5H614V363H615V359H616V358.5H617V359H619V359.5H620V359H621V358H623V361H624V362H625V361.5H626V362H627V361H628V362H630V349H631V339H632V336H633V342.5H634V349.5H635V361H637V361.5H639V356.5H640V356H641V357H642V361H643V362.5H644V362H647V364H649V359.5H650V359H651V363H652V360H653V357.5H655V359.5H656V357H658V356.5H659V363H660V362H661V356H662V352H663V350.5H664V353.5H665V354.5H666V355H667V357.5H669V358.5H670V359H671V358.5H672V359H673V357H674V356.5H675V361.5H677V357H678V356.5H679V357.5H680V356H682V356.5H683V356H684V356.5H685V358H686V358.5H687V358H688V356.5H689V357.5H690V357H691V359H692V354.5H693V351H694V352.5H695V356H697V359H698V359.5H699V356.5H700V356H701V355.5H703V355H704V356H705V360H706V360.5H707V352.5H708V348H709V349.5H710V356H712V355H713V353.5H714V353H715V354H716V354.5H717V356H718V357H720V356.5H721V354H723V356H724V356.5H725V359H726V361.5H727V358.5H728V358H729V353.5H730V353H731V358.5H733V358H734V356H735V357.5H736V360.5H737V358H738V357H739V357.5H740V357H741V362H742V362.5H743V360H745V367.5H747V355H748V354.5H750V354H751V357H752V356.5H753V355H754V357H755V358.5H756V359H757V361.5H758V361H759V362H761V357.5H763V360.5H764V361H765V360H766V361.5H767V360H769V362.5H770V363H772V358.5H773V358H774V357.5H775V360H777V359.5H778V358.5H779V361.5H780V362.5H781V360H782V357.5H783V352H785V357.5H786V360.5H787V360H788V356.5H789V363.5H790V365.5H791V361.5H792V362.5H793V363.5H794V361.5H795V359.5H796V359H797V363H799V359.5H802V360.5H804V360H805V358.5H806V357H807V359.5H809V356H810V355.5H811V360.5H812V358.5H813V359.5H814V360.5H815V363H816V363.5H817V361.5H818V360.5H819V362H820V362.5H821V357H822V359H823V361.5H824V361H825V362H826V362.5H827V362H828V360.5H829V358.5H830V358H831V357H832V356H833V358H834V359H835V362H836V363H837V360.5H838V359.5H839V357.5H841V361.5H842V362H843V356.5H844V355.5H845V358H847V361H849V359.5H850V359H851V358H852V357.5H853V361H854V361.5H855V359H856V359.5H857V357H858V358.5H859V360.5H860V361.5H861V365H862V362.5H863V359H864V357.5H865V358H866V357.5H867V356H868V358H869V360H870V361H871V358H872V358.5H873V351H874V334H875V331H876V343.5H877V358H878V358.5H879V360H880V359H882V358.5H883V359.5H884V360H885V359.5H886V360H887V359.5H888V360H889V359H890V362H891V361.5H893V361H894V360H895V357H896V356.5H897V360.5H898V361.5H899V365H900V365.5H901V359H902V361H903V362H904V361H905V357H906V356.5H907V357H908V360H909V359.5H911V360H914V360.5H915V360H916V359.5H917V357.5H918V358H919V357H921V359.5H922V360H923V366H924V365.5H925V357.5H926V358H927V362H928V359.5H929V362.5H930V361.5H931V358.5H932V359H933V331H934V314H935V326H936V356.5H937V359H938V360H939V358.5H940V358H941V364.5H942V363.5H943V360.5H944V347H945V321H947V346.5H948V360.5H949V364.5H950V364H951V363H952V362H953V361.5H954V359H955V333.5H956V323H957V336.5H958V357H959V341H960V316H961V319H962V350H963V361H964V362H965V359H966V361.5H967V360H968V358.5H969V361.5H970V362H971V361.5H972V361H973V361.5H974V361H975V358.5H976V359H977V360H978V360.5H979V361H980V360.5H981V362H982V360.5H983V356.5H984V358H985V362.5H986V362H987V361.5H988V360.5H989V361H990V361.5H991V362H992V361H993V363.5H995V364.5H997V363.5H998V362.5H999V360.5H1000V360H1001V362.5H1002V363.5H1003V365H1004V365.5H1005V363H1006V363.5H1007V363H1009V367.5H1010V367H1011V364.5H1013V367.5H1015V361H1016V362H1017V362.5H1018V363H1019V363.5H1022V362.5H1023V360.5H1025V364.5H1026V365.5H1027V362H1028V363H1029V362H1030V362.5H1031V365.5H1033V364.5H1035V366H1037V364.5H1039V362H1041V366.5H1042V366H1043V363.5H1045V364H1046V364.5H1047V370H1049V366.5H1051V363H1052V364.5H1053V369H1054V369.5H1055V368H1056V365H1057V364H1058V363H1059V361.5H1060V362H1061V365H1063V364.5H1065V366.5H1066V367H1067V362.5H1068V365H1069V365.5H1070V365H1071V362H1072V364H1073V367.5H1074V368H1075V369H1076V368H1077V364H1078V365.5H1079V370H1081V367.5H1082V368H1083V370H1086V370Z"/></g>
<path d="M331.9 206.5 V370" stroke="#d2d2d2" stroke-width="1" stroke-dasharray="3 2"/><path d="M407.2 206.5 V370" stroke="#d2d2d2" stroke-width="1" stroke-dasharray="3 2"/><path d="M482.6 206.5 V370" stroke="#d2d2d2" stroke-width="1" stroke-dasharray="3 2"/><path d="M557.9 206.5 V370" stroke="#d2d2d2" stroke-width="1" stroke-dasharray="3 2"/><path d="M633.3 206.5 V370" stroke="#d2d2d2" stroke-width="1" stroke-dasharray="3 2"/><path d="M708.7 206.5 V370" stroke="#d2d2d2" stroke-width="1" stroke-dasharray="3 2"/><path d="M784.0 206.5 V370" stroke="#d2d2d2" stroke-width="1" stroke-dasharray="3 2"/><path d="M859.4 206.5 V370" stroke="#d2d2d2" stroke-width="1" stroke-dasharray="3 2"/><path d="M934.7 206.5 V370" stroke="#d2d2d2" stroke-width="1" stroke-dasharray="3 2"/><path d="M1010.1 206.5 V370" stroke="#d2d2d2" stroke-width="1" stroke-dasharray="3 2"/><path d="M257 233.6 H1085.5" stroke="#d2d2d2" stroke-width="1" stroke-dasharray="3 2"/><path d="M257 261.1 H1085.5" stroke="#d2d2d2" stroke-width="1" stroke-dasharray="3 2"/><path d="M257 288.6 H1085.5" stroke="#d2d2d2" stroke-width="1" stroke-dasharray="3 2"/><path d="M257 316.0 H1085.5" stroke="#d2d2d2" stroke-width="1" stroke-dasharray="3 2"/><path d="M257 343.4 H1085.5" stroke="#d2d2d2" stroke-width="1" stroke-dasharray="3 2"/>
<path d="M256.5 206 V378.5 M256.5 206.5 H1086 V378" stroke="#dadada" stroke-width="1" fill="none"/>
<path d="M257 370.5 H1086" stroke="#e8e8e8" stroke-width="1"/>
<rect x="256.5" y="371" width="429.6" height="7" fill="#b02b25"/><rect x="742.6" y="371" width="60.3" height="7" fill="#4bbc7b"/><rect x="878.2" y="371" width="22.6" height="7" fill="#b02b25"/><rect x="931.0" y="371" width="60.3" height="7" fill="#4bbc7b"/><rect x="991.3" y="371" width="94.2" height="7" fill="#b02b25"/>
<path d="M256.5 378 V382" stroke="#c8c8c8" stroke-width="1"/><path d="M331.9 378 V382" stroke="#c8c8c8" stroke-width="1"/><path d="M407.2 378 V382" stroke="#c8c8c8" stroke-width="1"/><path d="M482.6 378 V382" stroke="#c8c8c8" stroke-width="1"/><path d="M557.9 378 V382" stroke="#c8c8c8" stroke-width="1"/><path d="M633.3 378 V382" stroke="#c8c8c8" stroke-width="1"/><path d="M708.7 378 V382" stroke="#c8c8c8" stroke-width="1"/><path d="M784.0 378 V382" stroke="#c8c8c8" stroke-width="1"/><path d="M859.4 378 V382" stroke="#c8c8c8" stroke-width="1"/><path d="M934.7 378 V382" stroke="#c8c8c8" stroke-width="1"/><path d="M1010.1 378 V382" stroke="#c8c8c8" stroke-width="1"/><path d="M1085.5 378 V382" stroke="#c8c8c8" stroke-width="1"/><path d="M252 206.2 H256.5" stroke="#c8c8c8" stroke-width="1"/><path d="M252 233.6 H256.5" stroke="#c8c8c8" stroke-width="1"/><path d="M252 261.1 H256.5" stroke="#c8c8c8" stroke-width="1"/><path d="M252 288.6 H256.5" stroke="#c8c8c8" stroke-width="1"/><path d="M252 316.0 H256.5" stroke="#c8c8c8" stroke-width="1"/><path d="M252 343.4 H256.5" stroke="#c8c8c8" stroke-width="1"/><path d="M252 370.9 H256.5" stroke="#c8c8c8" stroke-width="1"/>
<rect x="1101.2" y="205.9" width="14.4" height="164.1" fill="url(#cbar)"/>
<path d="M1101.2 219.29 h3.8 M1111.8 219.29 h3.8" stroke="#5a5a5a" stroke-width="1.1"/><path d="M1101.2 235.78 h3.8 M1111.8 235.78 h3.8" stroke="#5a5a5a" stroke-width="1.1"/><path d="M1101.2 252.27 h3.8 M1111.8 252.27 h3.8" stroke="#5a5a5a" stroke-width="1.1"/><path d="M1101.2 268.76 h3.8 M1111.8 268.76 h3.8" stroke="#5a5a5a" stroke-width="1.1"/><path d="M1101.2 285.25 h3.8 M1111.8 285.25 h3.8" stroke="#5a5a5a" stroke-width="1.1"/><path d="M1101.2 301.74 h3.8 M1111.8 301.74 h3.8" stroke="#5a5a5a" stroke-width="1.1"/><path d="M1101.2 318.23 h3.8 M1111.8 318.23 h3.8" stroke="#5a5a5a" stroke-width="1.1"/><path d="M1101.2 334.72 h3.8 M1111.8 334.72 h3.8" stroke="#5a5a5a" stroke-width="1.1"/><path d="M1101.2 351.21 h3.8 M1111.8 351.21 h3.8" stroke="#5a5a5a" stroke-width="1.1"/>
<rect x="818.7" y="394" width="15.3" height="15.5" fill="#b02b25"/>
<rect x="905" y="394" width="15.3" height="15.5" fill="#4bbc7b"/>
<rect x="1015.2" y="394" width="15.3" height="15.5" fill="#9a9c9e"/>
</svg>
<div class="t " style="left:229.80px;top:179.30px;font-size:13.0px;color:#444;">dBm/20MHz</div>
<div class="t " style="left:630.20px;top:180.75px;font-size:14.0px;color:#333;">Local  Analyzer</div>
<div class="t " style="left:1108.60px;top:180.08px;font-size:11.6px;color:#444;">CDF</div>
<div class="t" style="left:50.60px;width:200px;text-align:right;top:200.72px;font-size:11.2px;color:#444;">-40</div>
<div class="t" style="left:50.60px;width:200px;text-align:right;top:228.17px;font-size:11.2px;color:#444;">-50</div>
<div class="t" style="left:50.60px;width:200px;text-align:right;top:255.62px;font-size:11.2px;color:#444;">-60</div>
<div class="t" style="left:50.60px;width:200px;text-align:right;top:283.07px;font-size:11.2px;color:#444;">-70</div>
<div class="t" style="left:50.60px;width:200px;text-align:right;top:310.52px;font-size:11.2px;color:#444;">-80</div>
<div class="t" style="left:50.60px;width:200px;text-align:right;top:337.97px;font-size:11.2px;color:#444;">-90</div>
<div class="t" style="left:50.60px;width:200px;text-align:right;top:365.42px;font-size:11.2px;color:#444;">-100</div>
<div class="t" style="left:156.50px;width:200px;text-align:center;top:382.02px;font-size:11.2px;color:#444;">4900</div>
<div class="t" style="left:231.86px;width:200px;text-align:center;top:382.02px;font-size:11.2px;color:#444;">5000</div>
<div class="t" style="left:307.22px;width:200px;text-align:center;top:382.02px;font-size:11.2px;color:#444;">5100</div>
<div class="t" style="left:382.58px;width:200px;text-align:center;top:382.02px;font-size:11.2px;color:#444;">5200</div>
<div class="t" style="left:457.94px;width:200px;text-align:center;top:382.02px;font-size:11.2px;color:#444;">5300</div>
<div class="t" style="left:533.30px;width:200px;text-align:center;top:382.02px;font-size:11.2px;color:#444;">5400</div>
<div class="t" style="left:608.66px;width:200px;text-align:center;top:382.02px;font-size:11.2px;color:#444;">5500</div>
<div class="t" style="left:684.02px;width:200px;text-align:center;top:382.02px;font-size:11.2px;color:#444;">5600</div>
<div class="t" style="left:759.38px;width:200px;text-align:center;top:382.02px;font-size:11.2px;color:#444;">5700</div>
<div class="t" style="left:834.74px;width:200px;text-align:center;top:382.02px;font-size:11.2px;color:#444;">5800</div>
<div class="t" style="left:910.10px;width:200px;text-align:center;top:382.02px;font-size:11.2px;color:#444;">5900</div>
<div class="t" style="left:985.46px;width:200px;text-align:center;top:382.02px;font-size:11.2px;color:#444;">6000</div>
<div class="t " style="left:1116.40px;top:195.85px;font-size:11.4px;color:#444;">0</div>
<div class="t " style="left:1116.40px;top:212.34px;font-size:11.4px;color:#444;">0.1</div>
<div class="t " style="left:1116.40px;top:228.83px;font-size:11.4px;color:#444;">0.2</div>
<div class="t " style="left:1116.40px;top:245.32px;font-size:11.4px;color:#444;">0.3</div>
<div class="t " style="left:1116.40px;top:261.81px;font-size:11.4px;color:#444;">0.4</div>
<div class="t " style="left:1116.40px;top:278.30px;font-size:11.4px;color:#444;">0.5</div>
<div class="t " style="left:1116.40px;top:294.79px;font-size:11.4px;color:#444;">0.6</div>
<div class="t " style="left:1116.40px;top:311.28px;font-size:11.4px;color:#444;">0.7</div>
<div class="t " style="left:1116.40px;top:327.77px;font-size:11.4px;color:#444;">0.8</div>
<div class="t " style="left:1116.40px;top:344.26px;font-size:11.4px;color:#444;">0.9</div>
<div class="t " style="left:1116.40px;top:360.75px;font-size:11.4px;color:#444;">1</div>
<div class="t " style="left:1103.60px;top:380.67px;font-size:12.2px;color:#444;">MHz</div>
<div class="t " style="left:838.20px;top:396.82px;font-size:11.2px;color:#555;">Restricted</div>
<div class="t " style="left:924.40px;top:396.82px;font-size:11.2px;color:#555;">Active Channel</div>
<div class="t " style="left:1034.60px;top:396.82px;font-size:11.2px;color:#555;">Manual Exclusion</div>
<div class="t " style="left:243.70px;top:494.67px;font-size:9.6px;color:#484848;">Add a New Exclusion</div>
<div class="t " style="left:338.40px;top:494.67px;font-size:9.6px;color:#777;">(MHz)</div>
<div class="abs" style="left:244.4px;top:513.8px;width:99.6px;height:26.8px;background:#efefef;border-radius:3px;"></div><div class="abs" style="left:365px;top:513.8px;width:99.8px;height:26.8px;background:#efefef;border-radius:3px;"></div><div class="t " style="left:253.30px;top:522.12px;font-size:10.85px;color:#b4b4b4;">Start Frequency</div>
<div class="t " style="left:374.40px;top:522.12px;font-size:10.85px;color:#b4b4b4;">End Frequency</div>
<div class="abs" style="left:244.4px;top:547.5px;width:221px;height:26px;border:1px solid #cdcdcd;border-radius:3px;box-sizing:border-box;"></div><svg style="left:0;top:0" width="1200" height="858"><path d="M317 555 V565.3 M311.9 560.1 H322.2" stroke="#222" stroke-width="2.6"/></svg><div class="t " style="left:328.40px;top:555.27px;font-size:10.9px;color:#333;">Add Exclusion</div>
<div class="t " style="left:244.40px;top:584.67px;font-size:9.6px;color:#484848;">Existing Exclusions and Restrictions</div>
<div class="t " style="left:244.00px;top:605.14px;font-size:9.4px;color:#484848;">4900 - 5470</div>
<div class="t " style="left:244.00px;top:624.84px;font-size:9.4px;color:#484848;">5725 - 5755</div>
<div class="t " style="left:244.00px;top:644.54px;font-size:9.4px;color:#484848;">5875 - 6000</div>
<svg style="left:0;top:0" width="1200" height="858"><path d="M473.5 608.5 V607.3 A2.3 2.3 0 0 1 478.1 607.3 V608.5" fill="none" stroke="#4282d2" stroke-width="1.6"/><rect x="471.6" y="608.3" width="8.6" height="5.5" rx="0.8" fill="#4282d2"/><path d="M473.5 628.2 V627.0 A2.3 2.3 0 0 1 478.1 627.0 V628.2" fill="none" stroke="#4282d2" stroke-width="1.6"/><rect x="471.6" y="628.0" width="8.6" height="5.5" rx="0.8" fill="#4282d2"/><path d="M473.5 647.9 V646.6999999999999 A2.3 2.3 0 0 1 478.1 646.6999999999999 V647.9" fill="none" stroke="#4282d2" stroke-width="1.6"/><rect x="471.6" y="647.6999999999999" width="8.6" height="5.5" rx="0.8" fill="#4282d2"/></svg><div class="t " style="left:244.00px;top:667.74px;font-size:9.4px;color:#484848;">Regulatory Domain</div>
<div class="t " style="left:343.60px;top:667.07px;font-size:10.9px;color:#c4c4c4;">Germany</div>
<div class="t " style="left:574.00px;top:509.13px;font-size:9.3px;color:#484848;">Auto Everything</div>
<div class="abs" style="left:663.1px;top:499.4px;width:154.4px;height:26.2px;background:#f1f1f1;border-radius:3px;"></div><div class="t " style="left:671.10px;top:506.61px;font-size:11.8px;color:#333;">On</div>
<svg style="left:0;top:0" width="1200" height="858"><path d="M804.7 511 H809 L806.85 513.5 Z" fill="#999"/></svg><div class="t " style="left:574.00px;top:542.01px;font-size:9.2px;color:#484848;">Center Frequency 1</div>
<div class="t " style="left:574.00px;top:554.71px;font-size:9.2px;color:#484848;">(MHz)</div>
<div class="t " style="left:670.90px;top:546.90px;font-size:10.4px;color:#c8c8c8;">5585 DFS</div>
<div class="t " style="left:574.00px;top:587.01px;font-size:9.2px;color:#484848;">Tx Power 1 (dBm)</div>
<div class="t " style="left:671.10px;top:585.70px;font-size:10.4px;color:#c8c8c8;">7</div>
<div class="t " style="left:868.60px;top:502.31px;font-size:9.2px;color:#484848;">Channel Width</div>
<div class="t " style="left:868.60px;top:515.01px;font-size:9.2px;color:#484848;">(MHz)</div>
<div class="t " style="left:965.80px;top:507.70px;font-size:10.4px;color:#c8c8c8;">2x80</div>
<div class="t " style="left:868.60px;top:541.31px;font-size:9.2px;color:#484848;">Center Frequency 2</div>
<div class="t " style="left:868.60px;top:554.11px;font-size:9.2px;color:#484848;">(MHz)</div>
<div class="t " style="left:965.80px;top:546.90px;font-size:10.4px;color:#c8c8c8;">5835 DFS</div>
<div class="t " style="left:868.60px;top:586.71px;font-size:9.2px;color:#484848;">Tx Power 2 (dBm)</div>
<div class="t " style="left:965.80px;top:585.70px;font-size:10.4px;color:#c8c8c8;">7</div>
<div class="t " style="left:542.60px;top:619.56px;font-size:14.7px;color:#33383d;">Channel Recommendations</div>
<div class="t " style="left:554.60px;top:644.19px;font-size:11.35px;color:#3e4246;font-weight:bold;">Channel Width (MHz)</div>
<div class="t " style="left:683.30px;top:644.32px;font-size:11.2px;color:#3e4246;font-weight:bold;">Frequency 1 (MHz)</div>
<div class="t " style="left:796.60px;top:644.32px;font-size:11.2px;color:#3e4246;font-weight:bold;">Frequency 2 (MHz)</div>
<div class="t " style="left:909.60px;top:644.45px;font-size:11.05px;color:#3e4246;font-weight:bold;">Tx Power 1 (dBm)</div>
<div class="t " style="left:1014.80px;top:644.45px;font-size:11.05px;color:#3e4246;font-weight:bold;">Tx Power 2 (dBm)</div>
<div class="t " style="left:558.40px;top:673.21px;font-size:9.2px;color:#444;">2x80</div>
<div class="t " style="left:686.60px;top:673.21px;font-size:9.2px;color:#444;">5585</div>
<div class="t " style="left:799.60px;top:673.21px;font-size:9.2px;color:#444;">5835</div>
<div class="t " style="left:912.60px;top:673.21px;font-size:9.2px;color:#444;">7</div>
<div class="t " style="left:1018.40px;top:673.21px;font-size:9.2px;color:#444;">7</div>
<div class="t " style="left:558.40px;top:712.21px;font-size:9.2px;color:#444;">2x80</div>
<div class="t " style="left:686.60px;top:712.21px;font-size:9.2px;color:#444;">5580</div>
<div class="t " style="left:799.60px;top:712.21px;font-size:9.2px;color:#444;">5835</div>
<div class="t " style="left:912.60px;top:712.21px;font-size:9.2px;color:#444;">7</div>
<div class="t " style="left:1018.40px;top:712.21px;font-size:9.2px;color:#444;">7</div>
<div class="t " style="left:558.40px;top:751.21px;font-size:9.2px;color:#444;">2x80</div>
<div class="t " style="left:686.60px;top:751.21px;font-size:9.2px;color:#444;">5575</div>
<div class="t " style="left:799.60px;top:751.21px;font-size:9.2px;color:#444;">5835</div>
<div class="t " style="left:912.60px;top:751.21px;font-size:9.2px;color:#444;">7</div>
<div class="t " style="left:1018.40px;top:751.21px;font-size:9.2px;color:#444;">7</div>
</body></html>
